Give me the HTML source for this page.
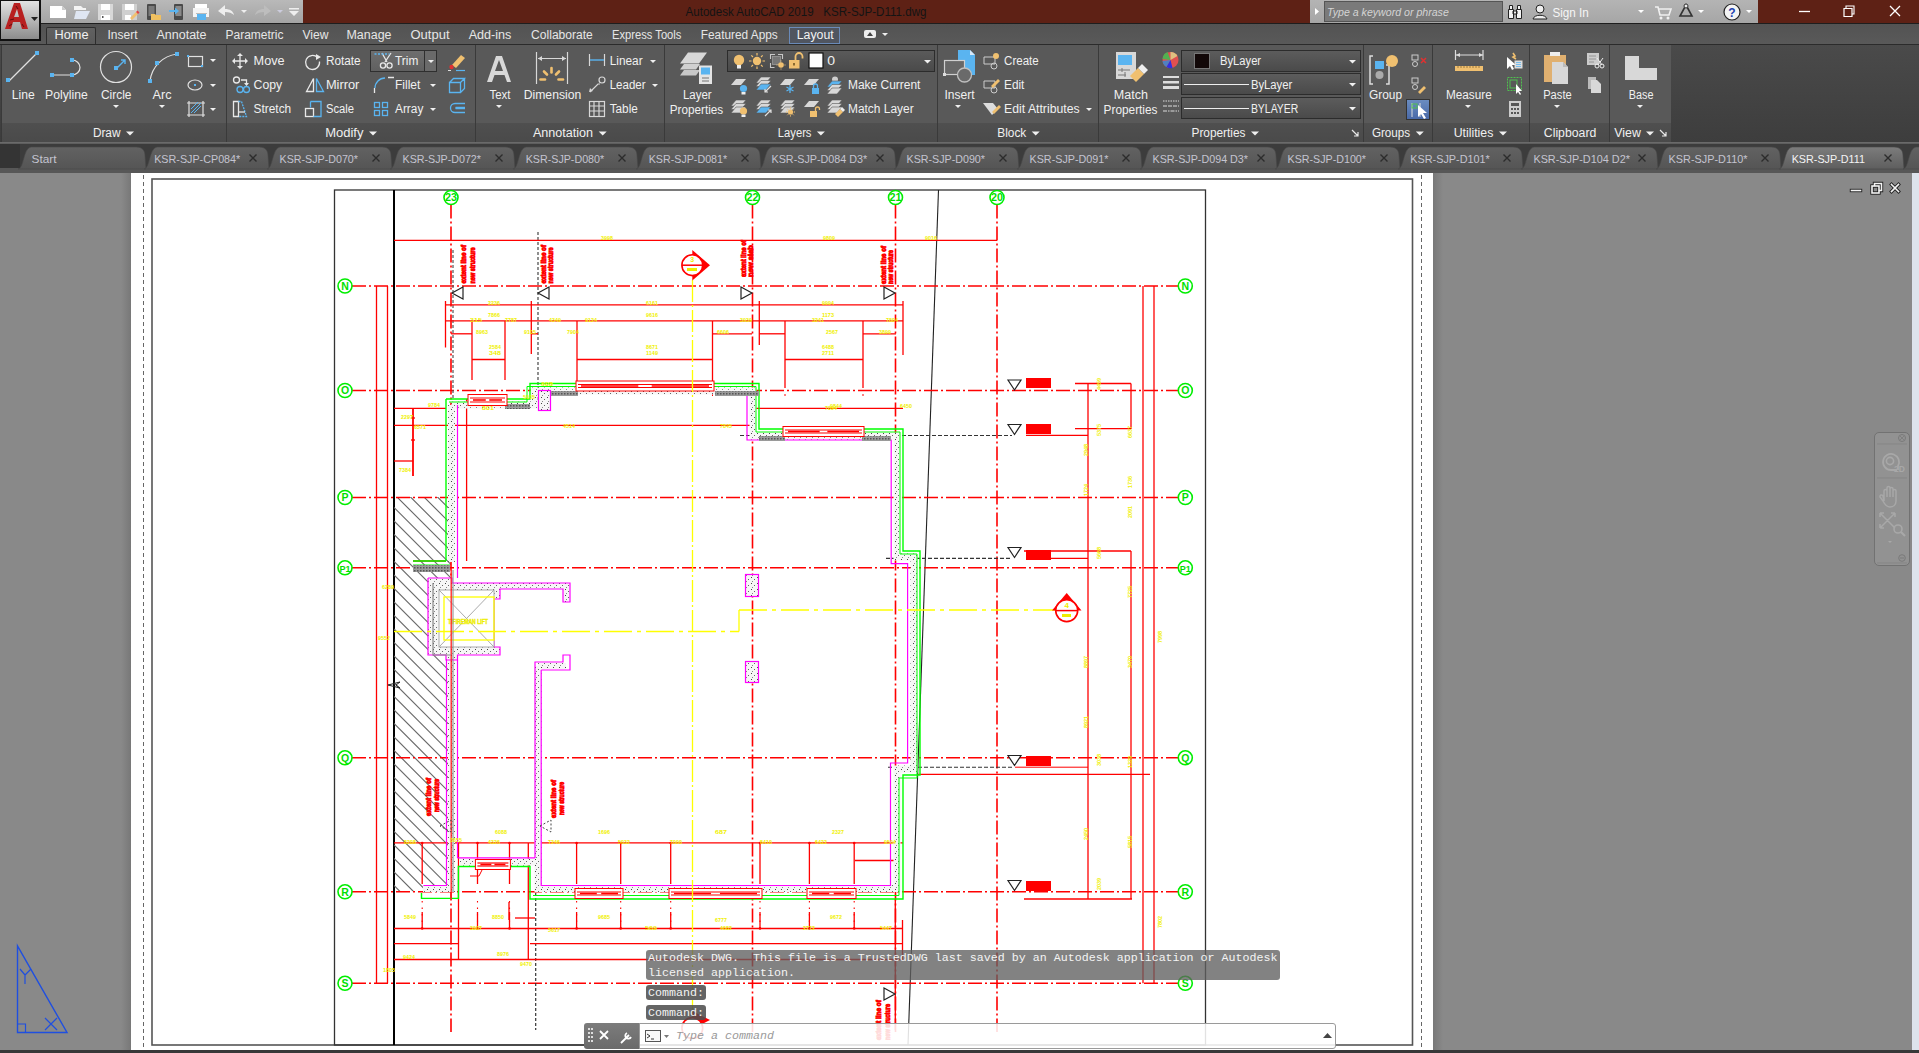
<!DOCTYPE html>
<html><head><meta charset="utf-8">
<style>
*{margin:0;padding:0;box-sizing:border-box}
html,body{width:1919px;height:1053px;overflow:hidden;background:#898989;font-family:"Liberation Sans",sans-serif;position:relative}
.a{position:absolute}
.t{position:absolute;white-space:nowrap;color:#ececec;font-size:12px;line-height:14px}
.rl{font-size:12.5px;color:#f0f0f0}
.panel{position:absolute;top:45px;height:97px;background:#595959;border-left:1px solid #3a3a3a}
.ptitle{position:absolute;left:0;bottom:0;width:100%;height:19px;background:linear-gradient(#4f4f4f,#4a4a4a);color:#eeeeee;font-size:12.5px;text-align:center;line-height:18px}
.arr{display:inline-block;width:0;height:0;border-left:4px solid transparent;border-right:4px solid transparent;border-top:5px solid #eee;margin-left:6px;vertical-align:2px}
.ftab{position:absolute;top:147px;height:23px;border-radius:10px 10px 2px 2px}
</style></head><body>
<div class="a" style="left:0;top:173px;width:1919px;height:880px;background:#898989"></div>
<svg class="a" style="left:0;top:0" width="1919" height="1053" viewBox="0 0 1919 1053"><defs><linearGradient id="shl" x1="1" y1="0" x2="0" y2="0"><stop offset="0" stop-color="#787878"/><stop offset="1" stop-color="#898989"/></linearGradient><linearGradient id="shr" x1="0" y1="0" x2="1" y2="0"><stop offset="0" stop-color="#787878"/><stop offset="1" stop-color="#898989"/></linearGradient></defs>
<rect x="121" y="173" width="10" height="877" fill="url(#shl)"/>
<rect x="1433" y="173" width="10" height="877" fill="url(#shr)"/>
<rect x="131" y="173" width="1302" height="877" fill="#ffffff" />
<line x1="143.5" y1="175" x2="143.5" y2="1048" stroke="#666" stroke-width="1" stroke-dasharray="4 3"/>
<line x1="1421.5" y1="175" x2="1421.5" y2="1048" stroke="#666" stroke-width="1" stroke-dasharray="4 3"/>
<rect x="152" y="179" width="1260.5" height="866" fill="none" stroke="#555" stroke-width="1.6"/>
<rect x="334.5" y="190" width="871" height="855" fill="none" stroke="#333" stroke-width="1.3"/>
<line x1="394" y1="190" x2="394" y2="1045" stroke="#000" stroke-width="2" />
<line x1="938.5" y1="190" x2="908" y2="1045" stroke="#222" stroke-width="1.1" />
<clipPath id="hc"><polygon points="394,497 451,497 451,891.5 394,891.5"/></clipPath>
<path clip-path="url(#hc)" d="M394 305.0 l70 70 M394 318.5 l70 70 M394 332.0 l70 70 M394 345.5 l70 70 M394 359.0 l70 70 M394 372.5 l70 70 M394 386.0 l70 70 M394 399.5 l70 70 M394 413.0 l70 70 M394 426.5 l70 70 M394 440.0 l70 70 M394 453.5 l70 70 M394 467.0 l70 70 M394 480.5 l70 70 M394 494.0 l70 70 M394 507.5 l70 70 M394 521.0 l70 70 M394 534.5 l70 70 M394 548.0 l70 70 M394 561.5 l70 70 M394 575.0 l70 70 M394 588.5 l70 70 M394 602.0 l70 70 M394 615.5 l70 70 M394 629.0 l70 70 M394 642.5 l70 70 M394 656.0 l70 70 M394 669.5 l70 70 M394 683.0 l70 70 M394 696.5 l70 70 M394 710.0 l70 70 M394 723.5 l70 70 M394 737.0 l70 70 M394 750.5 l70 70 M394 764.0 l70 70 M394 777.5 l70 70 M394 791.0 l70 70 M394 804.5 l70 70 M394 818.0 l70 70 M394 831.5 l70 70 M394 845.0 l70 70 M394 858.5 l70 70 M394 872.0 l70 70 M394 885.5 l70 70 M394 899.0 l70 70 M394 912.5 l70 70 M394 926.0 l70 70 M394 939.5 l70 70 M394 953.0 l70 70 M394 966.5 l70 70" stroke="#6a6a6a" stroke-width="1.15"/>
<line x1="352" y1="286" x2="1178" y2="286" stroke="#ff0000" stroke-width="1.6" stroke-dasharray="14 3 2 3"/>
<line x1="352" y1="390.5" x2="1178" y2="390.5" stroke="#ff0000" stroke-width="1.6" stroke-dasharray="14 3 2 3"/>
<line x1="352" y1="497.5" x2="1178" y2="497.5" stroke="#ff0000" stroke-width="1.6" stroke-dasharray="14 3 2 3"/>
<line x1="352" y1="567.8" x2="1178" y2="567.8" stroke="#ff0000" stroke-width="1.6" stroke-dasharray="14 3 2 3"/>
<line x1="352" y1="757.8" x2="1178" y2="757.8" stroke="#ff0000" stroke-width="1.6" stroke-dasharray="14 3 2 3"/>
<line x1="352" y1="891.8" x2="1178" y2="891.8" stroke="#ff0000" stroke-width="1.6" stroke-dasharray="14 3 2 3"/>
<line x1="352" y1="983.3" x2="1178" y2="983.3" stroke="#ff0000" stroke-width="1.6" stroke-dasharray="14 3 2 3"/>
<line x1="451" y1="204.5" x2="451" y2="1032" stroke="#ff0000" stroke-width="1.6" stroke-dasharray="14 3 2 3"/>
<line x1="752.5" y1="204.5" x2="752.5" y2="1032" stroke="#ff0000" stroke-width="1.6" stroke-dasharray="14 3 2 3"/>
<line x1="895.5" y1="204.5" x2="895.5" y2="1032" stroke="#ff0000" stroke-width="1.6" stroke-dasharray="14 3 2 3"/>
<line x1="997" y1="204.5" x2="997" y2="1032" stroke="#ff0000" stroke-width="1.6" stroke-dasharray="14 3 2 3"/>
<line x1="538" y1="232" x2="538" y2="400" stroke="#555" stroke-width="1.3" stroke-dasharray="3 2"/>
<line x1="535.7" y1="808" x2="535.7" y2="1030" stroke="#333" stroke-width="1.2" stroke-dasharray="3 2"/>
<line x1="453" y1="250" x2="453" y2="400" stroke="#555" stroke-width="1.2" stroke-dasharray="3 2"/>
<line x1="394" y1="240.4" x2="997" y2="240.4" stroke="#ff0000" stroke-width="1.3" />
<line x1="376.5" y1="286" x2="376.5" y2="983.3" stroke="#ff0000" stroke-width="1.3" />
<line x1="387.5" y1="286" x2="387.5" y2="983.3" stroke="#ff0000" stroke-width="1.3" />
<line x1="1143" y1="286" x2="1143" y2="983.3" stroke="#ff0000" stroke-width="1.3" />
<line x1="1154" y1="286" x2="1154" y2="983.3" stroke="#ff0000" stroke-width="1.3" />
<line x1="445" y1="304.8" x2="903" y2="304.8" stroke="#ff0000" stroke-width="1.3" />
<line x1="445" y1="320.9" x2="903" y2="320.9" stroke="#ff0000" stroke-width="1.3" />
<line x1="445.5" y1="301" x2="445.5" y2="347.5" stroke="#ff0000" stroke-width="1.3" />
<line x1="531.3" y1="301" x2="531.3" y2="354" stroke="#ff0000" stroke-width="1.3" />
<line x1="759.3" y1="301" x2="759.3" y2="345" stroke="#ff0000" stroke-width="1.3" />
<line x1="903" y1="301" x2="903" y2="355" stroke="#ff0000" stroke-width="1.3" />
<line x1="451" y1="333.8" x2="472" y2="333.8" stroke="#ff0000" stroke-width="1.3" />
<line x1="531" y1="333.8" x2="538" y2="333.8" stroke="#ff0000" stroke-width="1.3" />
<line x1="712.5" y1="333.8" x2="752" y2="333.8" stroke="#ff0000" stroke-width="1.3" />
<line x1="759" y1="333.8" x2="785" y2="333.8" stroke="#ff0000" stroke-width="1.3" />
<line x1="863" y1="333.8" x2="896" y2="333.8" stroke="#ff0000" stroke-width="1.3" />
<line x1="472" y1="321" x2="472" y2="380" stroke="#ff0000" stroke-width="1.3" />
<line x1="505" y1="321" x2="505" y2="380" stroke="#ff0000" stroke-width="1.3" />
<line x1="577" y1="321" x2="577" y2="388" stroke="#ff0000" stroke-width="1.3" />
<line x1="712.5" y1="321" x2="712.5" y2="388" stroke="#ff0000" stroke-width="1.3" />
<line x1="785" y1="321" x2="785" y2="388" stroke="#ff0000" stroke-width="1.3" />
<line x1="863" y1="321" x2="863" y2="388" stroke="#ff0000" stroke-width="1.3" />
<line x1="472" y1="359.5" x2="505" y2="359.5" stroke="#ff0000" stroke-width="1.3" />
<line x1="577" y1="359.5" x2="712.5" y2="359.5" stroke="#ff0000" stroke-width="1.3" />
<line x1="785" y1="359.5" x2="863" y2="359.5" stroke="#ff0000" stroke-width="1.3" />
<line x1="472" y1="394" x2="472" y2="396" stroke="#ff0000" stroke-width="1" />
<line x1="505" y1="394" x2="505" y2="396" stroke="#ff0000" stroke-width="1" />
<line x1="577" y1="394" x2="577" y2="396" stroke="#ff0000" stroke-width="1" />
<line x1="712.5" y1="394" x2="712.5" y2="396" stroke="#ff0000" stroke-width="1" />
<line x1="785" y1="394" x2="785" y2="396" stroke="#ff0000" stroke-width="1" />
<line x1="863" y1="394" x2="863" y2="396" stroke="#ff0000" stroke-width="1" />
<line x1="394" y1="408.3" x2="446" y2="408.3" stroke="#ff0000" stroke-width="1.3" />
<line x1="394" y1="425.4" x2="752" y2="425.4" stroke="#ff0000" stroke-width="1.3" />
<line x1="752" y1="408.3" x2="903" y2="408.3" stroke="#ff0000" stroke-width="1.3" />
<line x1="413" y1="408" x2="413" y2="476" stroke="#ff0000" stroke-width="1.8" />
<line x1="394" y1="461" x2="413" y2="461" stroke="#ff0000" stroke-width="1.3" />
<line x1="411" y1="418" x2="415" y2="418" stroke="#ff0000" stroke-width="1.3" />
<line x1="411" y1="440" x2="415" y2="440" stroke="#ff0000" stroke-width="1.3" />
<line x1="466.6" y1="399" x2="466.6" y2="561" stroke="#ff0000" stroke-width="1.3" />
<line x1="413" y1="561" x2="446" y2="561" stroke="#ff0000" stroke-width="1.3" />
<line x1="394" y1="842.8" x2="903" y2="842.8" stroke="#ff0000" stroke-width="1.3" />
<line x1="394" y1="928.5" x2="903" y2="928.5" stroke="#ff0000" stroke-width="1.3" />
<line x1="394" y1="943.7" x2="458.5" y2="943.7" stroke="#ff0000" stroke-width="1.3" />
<line x1="530" y1="943.7" x2="903" y2="943.7" stroke="#ff0000" stroke-width="1.3" />
<line x1="394" y1="959.5" x2="903" y2="959.5" stroke="#ff0000" stroke-width="1.3" />
<line x1="422.2" y1="843" x2="422.2" y2="884" stroke="#ff0000" stroke-width="1.3" />
<line x1="422.2" y1="901" x2="422.2" y2="928.5" stroke="#ff0000" stroke-width="1.1" stroke-dasharray="1.5 5"/>
<line x1="422.2" y1="912" x2="422.2" y2="928.5" stroke="#ff0000" stroke-width="1.3" />
<line x1="477.5" y1="843" x2="477.5" y2="884" stroke="#ff0000" stroke-width="1.3" />
<line x1="477.5" y1="901" x2="477.5" y2="928.5" stroke="#ff0000" stroke-width="1.1" stroke-dasharray="1.5 5"/>
<line x1="477.5" y1="912" x2="477.5" y2="928.5" stroke="#ff0000" stroke-width="1.3" />
<line x1="509.5" y1="843" x2="509.5" y2="884" stroke="#ff0000" stroke-width="1.3" />
<line x1="509.5" y1="901" x2="509.5" y2="928.5" stroke="#ff0000" stroke-width="1.1" stroke-dasharray="1.5 5"/>
<line x1="509.5" y1="912" x2="509.5" y2="928.5" stroke="#ff0000" stroke-width="1.3" />
<line x1="576.6" y1="843" x2="576.6" y2="884" stroke="#ff0000" stroke-width="1.3" />
<line x1="576.6" y1="901" x2="576.6" y2="928.5" stroke="#ff0000" stroke-width="1.1" stroke-dasharray="1.5 5"/>
<line x1="576.6" y1="912" x2="576.6" y2="928.5" stroke="#ff0000" stroke-width="1.3" />
<line x1="620.7" y1="843" x2="620.7" y2="884" stroke="#ff0000" stroke-width="1.3" />
<line x1="620.7" y1="901" x2="620.7" y2="928.5" stroke="#ff0000" stroke-width="1.1" stroke-dasharray="1.5 5"/>
<line x1="620.7" y1="912" x2="620.7" y2="928.5" stroke="#ff0000" stroke-width="1.3" />
<line x1="670.7" y1="843" x2="670.7" y2="884" stroke="#ff0000" stroke-width="1.3" />
<line x1="670.7" y1="901" x2="670.7" y2="928.5" stroke="#ff0000" stroke-width="1.1" stroke-dasharray="1.5 5"/>
<line x1="670.7" y1="912" x2="670.7" y2="928.5" stroke="#ff0000" stroke-width="1.3" />
<line x1="760" y1="843" x2="760" y2="884" stroke="#ff0000" stroke-width="1.3" />
<line x1="760" y1="901" x2="760" y2="928.5" stroke="#ff0000" stroke-width="1.1" stroke-dasharray="1.5 5"/>
<line x1="760" y1="912" x2="760" y2="928.5" stroke="#ff0000" stroke-width="1.3" />
<line x1="809.4" y1="843" x2="809.4" y2="884" stroke="#ff0000" stroke-width="1.3" />
<line x1="809.4" y1="901" x2="809.4" y2="928.5" stroke="#ff0000" stroke-width="1.1" stroke-dasharray="1.5 5"/>
<line x1="809.4" y1="912" x2="809.4" y2="928.5" stroke="#ff0000" stroke-width="1.3" />
<line x1="854.2" y1="843" x2="854.2" y2="884" stroke="#ff0000" stroke-width="1.3" />
<line x1="854.2" y1="901" x2="854.2" y2="928.5" stroke="#ff0000" stroke-width="1.1" stroke-dasharray="1.5 5"/>
<line x1="854.2" y1="912" x2="854.2" y2="928.5" stroke="#ff0000" stroke-width="1.3" />
<line x1="458.5" y1="843" x2="458.5" y2="960" stroke="#ff0000" stroke-width="1.3" />
<line x1="528.3" y1="843" x2="528.3" y2="960" stroke="#ff0000" stroke-width="1.3" />
<line x1="895.3" y1="899" x2="895.3" y2="1030" stroke="#ff0000" stroke-width="1.3" />
<line x1="902.5" y1="920" x2="902.5" y2="960" stroke="#ff0000" stroke-width="1.3" />
<line x1="855" y1="860.5" x2="896" y2="860.5" stroke="#ff0000" stroke-width="1.3" />
<circle cx="422.2" cy="928.5" r="1.3" fill="#ff0000"/><circle cx="422.2" cy="843" r="1.3" fill="#ff0000"/>
<circle cx="477.5" cy="928.5" r="1.3" fill="#ff0000"/><circle cx="477.5" cy="843" r="1.3" fill="#ff0000"/>
<circle cx="509.5" cy="928.5" r="1.3" fill="#ff0000"/><circle cx="509.5" cy="843" r="1.3" fill="#ff0000"/>
<circle cx="576.6" cy="928.5" r="1.3" fill="#ff0000"/><circle cx="576.6" cy="843" r="1.3" fill="#ff0000"/>
<circle cx="620.7" cy="928.5" r="1.3" fill="#ff0000"/><circle cx="620.7" cy="843" r="1.3" fill="#ff0000"/>
<circle cx="670.7" cy="928.5" r="1.3" fill="#ff0000"/><circle cx="670.7" cy="843" r="1.3" fill="#ff0000"/>
<circle cx="760" cy="928.5" r="1.3" fill="#ff0000"/><circle cx="760" cy="843" r="1.3" fill="#ff0000"/>
<circle cx="809.4" cy="928.5" r="1.3" fill="#ff0000"/><circle cx="809.4" cy="843" r="1.3" fill="#ff0000"/>
<circle cx="854.2" cy="928.5" r="1.3" fill="#ff0000"/><circle cx="854.2" cy="843" r="1.3" fill="#ff0000"/>
<line x1="1075" y1="383.5" x2="1131" y2="383.5" stroke="#ff0000" stroke-width="1.3" />
<line x1="1088" y1="383.5" x2="1088" y2="899" stroke="#ff0000" stroke-width="1.3" />
<line x1="1131" y1="383.5" x2="1131" y2="429" stroke="#ff0000" stroke-width="1.3" />
<line x1="1131" y1="551" x2="1131" y2="899" stroke="#ff0000" stroke-width="1.3" />
<line x1="1075" y1="428.6" x2="1131" y2="428.6" stroke="#ff0000" stroke-width="1.3" />
<line x1="1026" y1="435.3" x2="1088" y2="435.3" stroke="#ff0000" stroke-width="1.3" />
<line x1="1024" y1="551" x2="1131" y2="551" stroke="#ff0000" stroke-width="1.3" />
<line x1="1026" y1="558.4" x2="1088" y2="558.4" stroke="#ff0000" stroke-width="1.3" />
<line x1="918" y1="774.4" x2="1150" y2="774.4" stroke="#ff0000" stroke-width="1.3" />
<line x1="1015" y1="767.2" x2="1088" y2="767.2" stroke="#ff0000" stroke-width="1" />
<line x1="1024" y1="899" x2="1132" y2="899" stroke="#ff0000" stroke-width="1.3" />
<line x1="740" y1="435.5" x2="1012" y2="435.5" stroke="#333" stroke-width="1.1" stroke-dasharray="4 2"/>
<line x1="886" y1="558.4" x2="1012" y2="558.4" stroke="#333" stroke-width="1.1" stroke-dasharray="4 2"/>
<line x1="888" y1="767.2" x2="1012" y2="767.2" stroke="#333" stroke-width="1.1" stroke-dasharray="4 2"/>
<defs><pattern id="dots" width="6" height="6" patternUnits="userSpaceOnUse"><rect width="6" height="6" fill="#f6f6f6"/><rect x="1" y="1" width="1" height="1" fill="#444"/><rect x="4" y="3" width="1" height="1" fill="#666"/><rect x="2" y="5" width="1" height="1" fill="#888"/></pattern></defs>
<polyline points="451.5,405 534,405 534,391 753,391 753,436 897,436 897,557 914,557 914,769 897,769 897,888.5 538,888.5 538,666" fill="none" stroke="url(#dots)" stroke-width="7" />
<polyline points="451.5,405 451.5,562" fill="none" stroke="url(#dots)" stroke-width="7" />
<polyline points="451.5,650 451.5,888.5 423,888.5" fill="none" stroke="url(#dots)" stroke-width="7" />
<polyline points="459,862 541,862" fill="none" stroke="url(#dots)" stroke-width="7" />
<polyline points="446,399 530,399 530,383.5 759,383.5 759,429 903,429 903,551 920,551 920,775 903,775 903,899 530,899 530,866.5 458.4,866.5 458.4,898.4 421.5,898.4 421.5,893" fill="none" stroke="#00ff00" stroke-width="1.4" />
<polyline points="449,402 527,402 527,386.5 756,386.5 756,432 900,432 900,554 917,554 917,778 899,778 899,895.5 533,895.5" fill="none" stroke="#00ff00" stroke-width="1" />
<line x1="446" y1="399" x2="446" y2="561" stroke="#00ff00" stroke-width="1.4" />
<line x1="413" y1="561" x2="446" y2="561" stroke="#00ff00" stroke-width="1.4" />
<line x1="413" y1="565" x2="450" y2="565" stroke="#00ff00" stroke-width="1" />
<polyline points="747,395 747,440 891.2,440 891.2,563.6 907.6,563.6 907.6,763 890.5,763 890.5,885.5 541.2,885.5 541.2,670" fill="none" stroke="#ff00ff" stroke-width="1.2" />
<polyline points="446.5,660 446.5,885.5 423.4,885.5" fill="none" stroke="#ff00ff" stroke-width="1.2" />
<line x1="457.5" y1="405" x2="457.5" y2="578" stroke="#ff00ff" stroke-width="1.2" />
<line x1="457.5" y1="660" x2="457.5" y2="858" stroke="#ff00ff" stroke-width="1.2" />
<line x1="457.5" y1="857.8" x2="535" y2="857.8" stroke="#ff00ff" stroke-width="1.2" />
<polyline points="470,876 479,876 484,866" fill="none" stroke="#ff0000" stroke-width="1" />
<line x1="515" y1="918" x2="535" y2="918" stroke="#ff0000" stroke-width="1.3" />
<line x1="509" y1="902" x2="509" y2="920" stroke="#ff0000" stroke-width="1.3" />
<polyline points="428,578 452,578 452,583 570,583 570,602 563,602 563,589 500,589 500,599 494,599 494,647 500,647 500,655 494,655 457.5,655 457.5,660 446,660 446,655 428,655 428,578" fill="url(#dots)" stroke="#ff00ff" stroke-width="1.2" />
<rect x="439" y="590" width="55" height="57" fill="#fff" stroke="#aaa" stroke-width="1"/>
<line x1="439" y1="590" x2="494" y2="647" stroke="#aaa" stroke-width="1" />
<line x1="494" y1="590" x2="439" y2="647" stroke="#aaa" stroke-width="1" />
<rect x="444" y="597" width="50" height="43" fill="none" stroke="#ffff00" stroke-width="1.3"/>
<text x="448" y="623.5" font-size="6.5" font-weight="bold" fill="#eeee00" stroke="#eeee00" stroke-width="0.4" font-family="Liberation Sans" textLength="40" lengthAdjust="spacingAndGlyphs">T/FIREMAN LIFT</text>
<polyline points="566,666" fill="none" stroke="#ff00ff" stroke-width="1" />
<polyline points="538,666 566,666" fill="none" stroke="url(#dots)" stroke-width="6" />
<polyline points="535,858 535,662 563,662 563,655 570,655 570,670 541.2,670" fill="none" stroke="#ff00ff" stroke-width="1.2" />
<rect x="745.5" y="574.5" width="13" height="22" fill="url(#dots)" stroke="#ff00ff" stroke-width="1.2"/>
<rect x="745.5" y="661.5" width="13" height="21" fill="url(#dots)" stroke="#ff00ff" stroke-width="1.2"/>
<defs><pattern id="grav" width="3" height="3" patternUnits="userSpaceOnUse"><rect width="3" height="3" fill="#9a9a9a"/><rect x="0" y="0" width="1.5" height="1.5" fill="#555"/></pattern></defs>
<rect x="505" y="404" width="25" height="5" fill="url(#grav)" />
<rect x="540" y="391" width="38" height="5" fill="url(#grav)" />
<rect x="715" y="391" width="44" height="5" fill="url(#grav)" />
<rect x="759" y="436" width="26" height="5" fill="url(#grav)" />
<rect x="862" y="436" width="29" height="5" fill="url(#grav)" />
<rect x="413" y="565" width="37" height="7" fill="url(#grav)" />
<rect x="576" y="381.0" width="138" height="10" fill="#fff" stroke="#ff0000" stroke-width="1"/>
<line x1="578" y1="384.5" x2="712" y2="384.5" stroke="#ff0000" stroke-width="1.2" />
<line x1="578" y1="387.5" x2="712" y2="387.5" stroke="#ff0000" stroke-width="1.2" />
<line x1="581" y1="386.0" x2="638.3" y2="386.0" stroke="#ff0000" stroke-width="1.6" />
<line x1="651.7" y1="386.0" x2="709" y2="386.0" stroke="#ff0000" stroke-width="1.6" />
<rect x="783" y="426.5" width="81" height="10" fill="#fff" stroke="#ff0000" stroke-width="1"/>
<line x1="785" y1="430" x2="862" y2="430" stroke="#ff0000" stroke-width="1.2" />
<line x1="785" y1="433" x2="862" y2="433" stroke="#ff0000" stroke-width="1.2" />
<line x1="788" y1="431.5" x2="819.65" y2="431.5" stroke="#ff0000" stroke-width="1.6" />
<line x1="827.35" y1="431.5" x2="859" y2="431.5" stroke="#ff0000" stroke-width="1.6" />
<rect x="468" y="394.5" width="39" height="11" fill="#fff" stroke="#ff0000" stroke-width="1"/>
<line x1="470" y1="398" x2="505" y2="398" stroke="#ff0000" stroke-width="1.2" />
<line x1="470" y1="402" x2="505" y2="402" stroke="#ff0000" stroke-width="1.2" />
<line x1="473" y1="400.0" x2="485.75" y2="400.0" stroke="#ff0000" stroke-width="1.6" />
<line x1="489.25" y1="400.0" x2="502" y2="400.0" stroke="#ff0000" stroke-width="1.6" />
<rect x="575" y="888.5" width="48" height="10" fill="#fff" stroke="#ff0000" stroke-width="1"/>
<line x1="577" y1="892" x2="621" y2="892" stroke="#ff0000" stroke-width="1.2" />
<line x1="577" y1="895" x2="621" y2="895" stroke="#ff0000" stroke-width="1.2" />
<line x1="580" y1="893.5" x2="596.8" y2="893.5" stroke="#ff0000" stroke-width="1.6" />
<line x1="601.2" y1="893.5" x2="618" y2="893.5" stroke="#ff0000" stroke-width="1.6" />
<rect x="669" y="888.5" width="93" height="10" fill="#fff" stroke="#ff0000" stroke-width="1"/>
<line x1="671" y1="892" x2="760" y2="892" stroke="#ff0000" stroke-width="1.2" />
<line x1="671" y1="895" x2="760" y2="895" stroke="#ff0000" stroke-width="1.2" />
<line x1="674" y1="893.5" x2="711.05" y2="893.5" stroke="#ff0000" stroke-width="1.6" />
<line x1="719.95" y1="893.5" x2="757" y2="893.5" stroke="#ff0000" stroke-width="1.6" />
<rect x="807" y="888.5" width="49" height="10" fill="#fff" stroke="#ff0000" stroke-width="1"/>
<line x1="809" y1="892" x2="854" y2="892" stroke="#ff0000" stroke-width="1.2" />
<line x1="809" y1="895" x2="854" y2="895" stroke="#ff0000" stroke-width="1.2" />
<line x1="812" y1="893.5" x2="829.25" y2="893.5" stroke="#ff0000" stroke-width="1.6" />
<line x1="833.75" y1="893.5" x2="851" y2="893.5" stroke="#ff0000" stroke-width="1.6" />
<rect x="475.4" y="859.5" width="35" height="10" fill="#fff" stroke="#ff0000" stroke-width="1"/>
<line x1="477.4" y1="863" x2="508.4" y2="863" stroke="#ff0000" stroke-width="1.2" />
<line x1="477.4" y1="866" x2="508.4" y2="866" stroke="#ff0000" stroke-width="1.2" />
<line x1="480.4" y1="864.5" x2="491.34999999999997" y2="864.5" stroke="#ff0000" stroke-width="1.6" />
<line x1="494.45" y1="864.5" x2="505.4" y2="864.5" stroke="#ff0000" stroke-width="1.6" />
<rect x="538.5" y="390.5" width="12" height="20" fill="url(#dots)" stroke="#ff00ff" stroke-width="1.2"/>
<line x1="692.5" y1="280" x2="692.5" y2="1030" stroke="#ffff00" stroke-width="1.3" stroke-dasharray="22 3 2 3"/>
<line x1="394" y1="631.5" x2="739" y2="631.5" stroke="#ffff00" stroke-width="1.4" stroke-dasharray="28 5 4 5"/>
<line x1="739" y1="610" x2="739" y2="631.5" stroke="#ffff00" stroke-width="1.3" />
<line x1="739" y1="610" x2="1055" y2="610" stroke="#ffff00" stroke-width="1.4" stroke-dasharray="28 5 4 5"/>
<line x1="451.2" y1="570" x2="451.2" y2="900" stroke="#ff2020" stroke-width="1.3" />
<line x1="453" y1="570" x2="453" y2="892" stroke="#888" stroke-width="1" />
<polyline points="433,583 433,655 451,655" fill="none" stroke="#888" stroke-width="1.2" />
<path d="M388 685 l12 -3 l-4 3 l4 3 z" fill="none" stroke="#222" stroke-width="1"/>
<path d="M452 293 L463 287 L463 299 Z" fill="#fff" stroke="#222" stroke-width="1.2"/>
<path d="M538 293 L549 287 L549 299 Z" fill="#fff" stroke="#222" stroke-width="1.2"/>
<path d="M752 293 L741 287 L741 299 Z" fill="#fff" stroke="#222" stroke-width="1.2"/>
<path d="M895 293 L884 287 L884 299 Z" fill="#fff" stroke="#222" stroke-width="1.2"/>
<path d="M895 994 L884 988 L884 1000 Z" fill="#fff" stroke="#222" stroke-width="1.2"/>
<path d="M540 826 l11 -6 v12 z" fill="none" stroke="#444" stroke-width="1" stroke-dasharray="2 2"/>
<path d="M440 826 l11 -6 v12 z" fill="none" stroke="#444" stroke-width="1" stroke-dasharray="2 2"/>
<path d="M1008 380 h13 l-6.5 10 z" fill="#fff" stroke="#222" stroke-width="1.2"/>
<rect x="1026" y="378" width="25" height="10" fill="#ff0000" />
<path d="M1008 424.5 h13 l-6.5 10 z" fill="#fff" stroke="#222" stroke-width="1.2"/>
<rect x="1026" y="424" width="25" height="10" fill="#ff0000" />
<path d="M1008 547.5 h13 l-6.5 10 z" fill="#fff" stroke="#222" stroke-width="1.2"/>
<rect x="1026" y="550" width="25" height="10" fill="#ff0000" />
<path d="M1008 755.5 h13 l-6.5 10 z" fill="#fff" stroke="#222" stroke-width="1.2"/>
<rect x="1026" y="756" width="25" height="10" fill="#ff0000" />
<path d="M1008 880.5 h13 l-6.5 10 z" fill="#fff" stroke="#222" stroke-width="1.2"/>
<rect x="1026" y="881" width="25" height="10" fill="#ff0000" />
<text transform="translate(466,283.5) rotate(-90)" font-size="7.5" font-weight="bold" fill="#ff0000" stroke="#ff0000" stroke-width="0.9" font-family="Liberation Sans" textLength="38.5" lengthAdjust="spacingAndGlyphs">extent line of</text>
<text transform="translate(474.5,283.5) rotate(-90)" font-size="7.5" font-weight="bold" fill="#ff0000" stroke="#ff0000" stroke-width="0.9" font-family="Liberation Sans" textLength="36" lengthAdjust="spacingAndGlyphs">new structure</text>
<text transform="translate(545.5,283.5) rotate(-90)" font-size="7.5" font-weight="bold" fill="#ff0000" stroke="#ff0000" stroke-width="0.9" font-family="Liberation Sans" textLength="38.5" lengthAdjust="spacingAndGlyphs">extent line of</text>
<text transform="translate(553,283.5) rotate(-90)" font-size="7.5" font-weight="bold" fill="#ff0000" stroke="#ff0000" stroke-width="0.9" font-family="Liberation Sans" textLength="36" lengthAdjust="spacingAndGlyphs">new structure</text>
<text transform="translate(746,277) rotate(-90)" font-size="7.5" font-weight="bold" fill="#ff0000" stroke="#ff0000" stroke-width="0.9" font-family="Liberation Sans" textLength="37" lengthAdjust="spacingAndGlyphs">extent line of</text>
<text transform="translate(753,277) rotate(-90)" font-size="7.5" font-weight="bold" fill="#ff0000" stroke="#ff0000" stroke-width="0.9" font-family="Liberation Sans" textLength="32" lengthAdjust="spacingAndGlyphs">new slab</text>
<text transform="translate(886,284) rotate(-90)" font-size="7.5" font-weight="bold" fill="#ff0000" stroke="#ff0000" stroke-width="0.9" font-family="Liberation Sans" textLength="38" lengthAdjust="spacingAndGlyphs">extent line of</text>
<text transform="translate(893,284) rotate(-90)" font-size="7.5" font-weight="bold" fill="#ff0000" stroke="#ff0000" stroke-width="0.9" font-family="Liberation Sans" textLength="34" lengthAdjust="spacingAndGlyphs">new structure</text>
<text transform="translate(431,816) rotate(-90)" font-size="7.5" font-weight="bold" fill="#ff0000" stroke="#ff0000" stroke-width="0.9" font-family="Liberation Sans" textLength="38" lengthAdjust="spacingAndGlyphs">extent line of</text>
<text transform="translate(439,812) rotate(-90)" font-size="7.5" font-weight="bold" fill="#ff0000" stroke="#ff0000" stroke-width="0.9" font-family="Liberation Sans" textLength="33" lengthAdjust="spacingAndGlyphs">new structure</text>
<text transform="translate(556,818) rotate(-90)" font-size="7.5" font-weight="bold" fill="#ff0000" stroke="#ff0000" stroke-width="0.9" font-family="Liberation Sans" textLength="38" lengthAdjust="spacingAndGlyphs">extent line of</text>
<text transform="translate(564,815) rotate(-90)" font-size="7.5" font-weight="bold" fill="#ff0000" stroke="#ff0000" stroke-width="0.9" font-family="Liberation Sans" textLength="33" lengthAdjust="spacingAndGlyphs">new structure</text>
<text transform="translate(881,1040) rotate(-90)" font-size="7.5" font-weight="bold" fill="#ff0000" stroke="#ff0000" stroke-width="0.9" font-family="Liberation Sans" textLength="40" lengthAdjust="spacingAndGlyphs">extent line of</text>
<text transform="translate(890,1040) rotate(-90)" font-size="7.5" font-weight="bold" fill="#ff0000" stroke="#ff0000" stroke-width="0.9" font-family="Liberation Sans" textLength="36" lengthAdjust="spacingAndGlyphs">new structure</text>
<path d="M692.3 250 L710 265.2 L692.3 280.5 Z" fill="#ff0000"/><circle cx="692.3" cy="265.2" r="10.4" fill="#fff" stroke="#ff0000" stroke-width="1.6"/><line x1="682" y1="265.2" x2="702.6" y2="265.2" stroke="#ff0000" stroke-width="1.5"/>
<text x="692.3" y="262" font-size="7" font-weight="bold" text-anchor="middle" fill="#eeee00" font-family="Liberation Sans">3</text><rect x="687" y="268" width="10" height="3" fill="#eeee00"/>
<path d="M1066.7 593 L1081.5 610.6 L1052 610.6 Z" fill="#ff0000"/><circle cx="1066.7" cy="610.6" r="11" fill="#fff" stroke="#ff0000" stroke-width="1.6"/><line x1="1056" y1="610.6" x2="1077.5" y2="610.6" stroke="#ff0000" stroke-width="1.5"/>
<text x="1066.7" y="608" font-size="8" font-weight="bold" text-anchor="middle" fill="#eeee00" font-family="Liberation Sans">4</text><rect x="1062" y="614" width="9" height="3" fill="#eeee00"/>
<path d="M692.3 1011 L710 1020 L692.3 1029 Z" fill="#ff0000"/><circle cx="692.3" cy="1028" r="10.4" fill="#fff" stroke="#ff0000" stroke-width="1.6"/>
<circle cx="345" cy="286" r="7" fill="#fff" stroke="#00ee00" stroke-width="1.6"/>
<text x="345" y="289.8" font-size="10.5" font-weight="bold" text-anchor="middle" fill="#00e000" font-family="Liberation Sans">N</text>
<circle cx="1185.3" cy="286" r="7" fill="#fff" stroke="#00ee00" stroke-width="1.6"/>
<text x="1185.3" y="289.8" font-size="10.5" font-weight="bold" text-anchor="middle" fill="#00e000" font-family="Liberation Sans">N</text>
<circle cx="345" cy="390.5" r="7" fill="#fff" stroke="#00ee00" stroke-width="1.6"/>
<text x="345" y="394.3" font-size="10.5" font-weight="bold" text-anchor="middle" fill="#00e000" font-family="Liberation Sans">O</text>
<circle cx="1185.3" cy="390.5" r="7" fill="#fff" stroke="#00ee00" stroke-width="1.6"/>
<text x="1185.3" y="394.3" font-size="10.5" font-weight="bold" text-anchor="middle" fill="#00e000" font-family="Liberation Sans">O</text>
<circle cx="345" cy="497.5" r="7" fill="#fff" stroke="#00ee00" stroke-width="1.6"/>
<text x="345" y="501.3" font-size="10.5" font-weight="bold" text-anchor="middle" fill="#00e000" font-family="Liberation Sans">P</text>
<circle cx="1185.3" cy="497.5" r="7" fill="#fff" stroke="#00ee00" stroke-width="1.6"/>
<text x="1185.3" y="501.3" font-size="10.5" font-weight="bold" text-anchor="middle" fill="#00e000" font-family="Liberation Sans">P</text>
<circle cx="345" cy="567.8" r="7" fill="#fff" stroke="#00ee00" stroke-width="1.6"/>
<text x="345" y="571.5999999999999" font-size="9" font-weight="bold" text-anchor="middle" fill="#00e000" font-family="Liberation Sans">P1</text>
<circle cx="1185.3" cy="567.8" r="7" fill="#fff" stroke="#00ee00" stroke-width="1.6"/>
<text x="1185.3" y="571.5999999999999" font-size="9" font-weight="bold" text-anchor="middle" fill="#00e000" font-family="Liberation Sans">P1</text>
<circle cx="345" cy="757.8" r="7" fill="#fff" stroke="#00ee00" stroke-width="1.6"/>
<text x="345" y="761.5999999999999" font-size="10.5" font-weight="bold" text-anchor="middle" fill="#00e000" font-family="Liberation Sans">Q</text>
<circle cx="1185.3" cy="757.8" r="7" fill="#fff" stroke="#00ee00" stroke-width="1.6"/>
<text x="1185.3" y="761.5999999999999" font-size="10.5" font-weight="bold" text-anchor="middle" fill="#00e000" font-family="Liberation Sans">Q</text>
<circle cx="345" cy="891.8" r="7" fill="#fff" stroke="#00ee00" stroke-width="1.6"/>
<text x="345" y="895.5999999999999" font-size="10.5" font-weight="bold" text-anchor="middle" fill="#00e000" font-family="Liberation Sans">R</text>
<circle cx="1185.3" cy="891.8" r="7" fill="#fff" stroke="#00ee00" stroke-width="1.6"/>
<text x="1185.3" y="895.5999999999999" font-size="10.5" font-weight="bold" text-anchor="middle" fill="#00e000" font-family="Liberation Sans">R</text>
<circle cx="345" cy="983.3" r="7" fill="#fff" stroke="#00ee00" stroke-width="1.6"/>
<text x="345" y="987.0999999999999" font-size="10.5" font-weight="bold" text-anchor="middle" fill="#00e000" font-family="Liberation Sans">S</text>
<circle cx="1185.3" cy="983.3" r="7" fill="#fff" stroke="#00ee00" stroke-width="1.6"/>
<text x="1185.3" y="987.0999999999999" font-size="10.5" font-weight="bold" text-anchor="middle" fill="#00e000" font-family="Liberation Sans">S</text>
<circle cx="451" cy="197.5" r="7" fill="#fff" stroke="#00ee00" stroke-width="1.6"/>
<text x="445" y="201.3" font-size="10.5" font-weight="bold" fill="#00e000" font-family="Liberation Sans" textLength="12" lengthAdjust="spacingAndGlyphs">23</text>
<circle cx="752.5" cy="197.5" r="7" fill="#fff" stroke="#00ee00" stroke-width="1.6"/>
<text x="746.5" y="201.3" font-size="10.5" font-weight="bold" fill="#00e000" font-family="Liberation Sans" textLength="12" lengthAdjust="spacingAndGlyphs">22</text>
<circle cx="895.5" cy="197.5" r="7" fill="#fff" stroke="#00ee00" stroke-width="1.6"/>
<text x="889.5" y="201.3" font-size="10.5" font-weight="bold" fill="#00e000" font-family="Liberation Sans" textLength="12" lengthAdjust="spacingAndGlyphs">21</text>
<circle cx="997" cy="197.5" r="7" fill="#fff" stroke="#00ee00" stroke-width="1.6"/>
<text x="991" y="201.3" font-size="10.5" font-weight="bold" fill="#00e000" font-family="Liberation Sans" textLength="12" lengthAdjust="spacingAndGlyphs">20</text>
<text x="601" y="240" font-size="6" font-weight="bold" fill="#f0f000" font-family="Liberation Sans" textLength="12" lengthAdjust="spacingAndGlyphs">3998</text>
<text x="823" y="240" font-size="6" font-weight="bold" fill="#f0f000" font-family="Liberation Sans" textLength="12" lengthAdjust="spacingAndGlyphs">9809</text>
<text x="925" y="240" font-size="6" font-weight="bold" fill="#f0f000" font-family="Liberation Sans" textLength="12" lengthAdjust="spacingAndGlyphs">9016</text>
<text x="488" y="305" font-size="6" font-weight="bold" fill="#f0f000" font-family="Liberation Sans" textLength="12" lengthAdjust="spacingAndGlyphs">2236</text>
<text x="646" y="305" font-size="6" font-weight="bold" fill="#f0f000" font-family="Liberation Sans" textLength="12" lengthAdjust="spacingAndGlyphs">6161</text>
<text x="822" y="305" font-size="6" font-weight="bold" fill="#f0f000" font-family="Liberation Sans" textLength="12" lengthAdjust="spacingAndGlyphs">9994</text>
<text x="488" y="317" font-size="6" font-weight="bold" fill="#f0f000" font-family="Liberation Sans" textLength="12" lengthAdjust="spacingAndGlyphs">7866</text>
<text x="646" y="317" font-size="6" font-weight="bold" fill="#f0f000" font-family="Liberation Sans" textLength="12" lengthAdjust="spacingAndGlyphs">9616</text>
<text x="822" y="317" font-size="6" font-weight="bold" fill="#f0f000" font-family="Liberation Sans" textLength="12" lengthAdjust="spacingAndGlyphs">1173</text>
<text x="470" y="322" font-size="6" font-weight="bold" fill="#f0f000" font-family="Liberation Sans" textLength="12" lengthAdjust="spacingAndGlyphs">315</text>
<text x="505" y="322" font-size="6" font-weight="bold" fill="#f0f000" font-family="Liberation Sans" textLength="12" lengthAdjust="spacingAndGlyphs">7787</text>
<text x="549" y="322" font-size="6" font-weight="bold" fill="#f0f000" font-family="Liberation Sans" textLength="12" lengthAdjust="spacingAndGlyphs">4349</text>
<text x="585" y="322" font-size="6" font-weight="bold" fill="#f0f000" font-family="Liberation Sans" textLength="12" lengthAdjust="spacingAndGlyphs">9124</text>
<text x="740" y="322" font-size="6" font-weight="bold" fill="#f0f000" font-family="Liberation Sans" textLength="12" lengthAdjust="spacingAndGlyphs">3939</text>
<text x="812" y="322" font-size="6" font-weight="bold" fill="#f0f000" font-family="Liberation Sans" textLength="12" lengthAdjust="spacingAndGlyphs">3241</text>
<text x="886" y="322" font-size="6" font-weight="bold" fill="#f0f000" font-family="Liberation Sans" textLength="12" lengthAdjust="spacingAndGlyphs">7804</text>
<text x="476" y="334" font-size="6" font-weight="bold" fill="#f0f000" font-family="Liberation Sans" textLength="12" lengthAdjust="spacingAndGlyphs">8963</text>
<text x="524" y="334" font-size="6" font-weight="bold" fill="#f0f000" font-family="Liberation Sans" textLength="12" lengthAdjust="spacingAndGlyphs">9105</text>
<text x="567" y="334" font-size="6" font-weight="bold" fill="#f0f000" font-family="Liberation Sans" textLength="12" lengthAdjust="spacingAndGlyphs">7904</text>
<text x="717" y="334" font-size="6" font-weight="bold" fill="#f0f000" font-family="Liberation Sans" textLength="12" lengthAdjust="spacingAndGlyphs">6606</text>
<text x="826" y="334" font-size="6" font-weight="bold" fill="#f0f000" font-family="Liberation Sans" textLength="12" lengthAdjust="spacingAndGlyphs">2567</text>
<text x="879" y="334" font-size="6" font-weight="bold" fill="#f0f000" font-family="Liberation Sans" textLength="12" lengthAdjust="spacingAndGlyphs">3899</text>
<text x="489" y="349" font-size="6" font-weight="bold" fill="#f0f000" font-family="Liberation Sans" textLength="12" lengthAdjust="spacingAndGlyphs">2584</text>
<text x="646" y="349" font-size="6" font-weight="bold" fill="#f0f000" font-family="Liberation Sans" textLength="12" lengthAdjust="spacingAndGlyphs">8671</text>
<text x="822" y="349" font-size="6" font-weight="bold" fill="#f0f000" font-family="Liberation Sans" textLength="12" lengthAdjust="spacingAndGlyphs">6488</text>
<text x="489" y="355" font-size="6" font-weight="bold" fill="#f0f000" font-family="Liberation Sans" textLength="12" lengthAdjust="spacingAndGlyphs">348</text>
<text x="646" y="355" font-size="6" font-weight="bold" fill="#f0f000" font-family="Liberation Sans" textLength="12" lengthAdjust="spacingAndGlyphs">1149</text>
<text x="822" y="355" font-size="6" font-weight="bold" fill="#f0f000" font-family="Liberation Sans" textLength="12" lengthAdjust="spacingAndGlyphs">2711</text>
<text x="428" y="407" font-size="6" font-weight="bold" fill="#f0f000" font-family="Liberation Sans" textLength="12" lengthAdjust="spacingAndGlyphs">9784</text>
<text x="482" y="410" font-size="6" font-weight="bold" fill="#f0f000" font-family="Liberation Sans" textLength="12" lengthAdjust="spacingAndGlyphs">801</text>
<text x="523" y="399" font-size="6" font-weight="bold" fill="#f0f000" font-family="Liberation Sans" textLength="12" lengthAdjust="spacingAndGlyphs">5035</text>
<text x="541" y="386" font-size="6" font-weight="bold" fill="#f0f000" font-family="Liberation Sans" textLength="12" lengthAdjust="spacingAndGlyphs">608</text>
<text x="563" y="428" font-size="6" font-weight="bold" fill="#f0f000" font-family="Liberation Sans" textLength="12" lengthAdjust="spacingAndGlyphs">4514</text>
<text x="720" y="428" font-size="6" font-weight="bold" fill="#f0f000" font-family="Liberation Sans" textLength="12" lengthAdjust="spacingAndGlyphs">7845</text>
<text x="830" y="408" font-size="6" font-weight="bold" fill="#f0f000" font-family="Liberation Sans" textLength="12" lengthAdjust="spacingAndGlyphs">9844</text>
<text x="900" y="408" font-size="6" font-weight="bold" fill="#f0f000" font-family="Liberation Sans" textLength="12" lengthAdjust="spacingAndGlyphs">6450</text>
<text x="825" y="410" font-size="6" font-weight="bold" fill="#f0f000" font-family="Liberation Sans" textLength="12" lengthAdjust="spacingAndGlyphs">7094</text>
<text x="414" y="429" font-size="6" font-weight="bold" fill="#f0f000" font-family="Liberation Sans" textLength="12" lengthAdjust="spacingAndGlyphs">6571</text>
<text x="378" y="640" font-size="6" font-weight="bold" fill="#f0f000" font-family="Liberation Sans" textLength="12" lengthAdjust="spacingAndGlyphs">9552</text>
<text x="399" y="472" font-size="6" font-weight="bold" fill="#f0f000" font-family="Liberation Sans" textLength="12" lengthAdjust="spacingAndGlyphs">7384</text>
<text x="401" y="419" font-size="6" font-weight="bold" fill="#f0f000" font-family="Liberation Sans" textLength="12" lengthAdjust="spacingAndGlyphs">2297</text>
<text x="495" y="834" font-size="6" font-weight="bold" fill="#f0f000" font-family="Liberation Sans" textLength="12" lengthAdjust="spacingAndGlyphs">6088</text>
<text x="598" y="834" font-size="6" font-weight="bold" fill="#f0f000" font-family="Liberation Sans" textLength="12" lengthAdjust="spacingAndGlyphs">1696</text>
<text x="715" y="834" font-size="6" font-weight="bold" fill="#f0f000" font-family="Liberation Sans" textLength="12" lengthAdjust="spacingAndGlyphs">687</text>
<text x="832" y="834" font-size="6" font-weight="bold" fill="#f0f000" font-family="Liberation Sans" textLength="12" lengthAdjust="spacingAndGlyphs">2327</text>
<text x="404" y="844" font-size="6" font-weight="bold" fill="#f0f000" font-family="Liberation Sans" textLength="12" lengthAdjust="spacingAndGlyphs">8208</text>
<text x="450" y="842" font-size="6" font-weight="bold" fill="#f0f000" font-family="Liberation Sans" textLength="12" lengthAdjust="spacingAndGlyphs">3655</text>
<text x="488" y="844" font-size="6" font-weight="bold" fill="#f0f000" font-family="Liberation Sans" textLength="12" lengthAdjust="spacingAndGlyphs">4326</text>
<text x="548" y="844" font-size="6" font-weight="bold" fill="#f0f000" font-family="Liberation Sans" textLength="12" lengthAdjust="spacingAndGlyphs">7246</text>
<text x="618" y="844" font-size="6" font-weight="bold" fill="#f0f000" font-family="Liberation Sans" textLength="12" lengthAdjust="spacingAndGlyphs">5032</text>
<text x="670" y="844" font-size="6" font-weight="bold" fill="#f0f000" font-family="Liberation Sans" textLength="12" lengthAdjust="spacingAndGlyphs">7000</text>
<text x="760" y="844" font-size="6" font-weight="bold" fill="#f0f000" font-family="Liberation Sans" textLength="12" lengthAdjust="spacingAndGlyphs">8410</text>
<text x="815" y="844" font-size="6" font-weight="bold" fill="#f0f000" font-family="Liberation Sans" textLength="12" lengthAdjust="spacingAndGlyphs">6422</text>
<text x="884" y="844" font-size="6" font-weight="bold" fill="#f0f000" font-family="Liberation Sans" textLength="12" lengthAdjust="spacingAndGlyphs">9504</text>
<text x="404" y="919" font-size="6" font-weight="bold" fill="#f0f000" font-family="Liberation Sans" textLength="12" lengthAdjust="spacingAndGlyphs">5849</text>
<text x="492" y="919" font-size="6" font-weight="bold" fill="#f0f000" font-family="Liberation Sans" textLength="12" lengthAdjust="spacingAndGlyphs">8850</text>
<text x="598" y="919" font-size="6" font-weight="bold" fill="#f0f000" font-family="Liberation Sans" textLength="12" lengthAdjust="spacingAndGlyphs">9685</text>
<text x="715" y="922" font-size="6" font-weight="bold" fill="#f0f000" font-family="Liberation Sans" textLength="12" lengthAdjust="spacingAndGlyphs">6777</text>
<text x="830" y="919" font-size="6" font-weight="bold" fill="#f0f000" font-family="Liberation Sans" textLength="12" lengthAdjust="spacingAndGlyphs">9672</text>
<text x="470" y="930" font-size="6" font-weight="bold" fill="#f0f000" font-family="Liberation Sans" textLength="12" lengthAdjust="spacingAndGlyphs">3907</text>
<text x="548" y="932" font-size="6" font-weight="bold" fill="#f0f000" font-family="Liberation Sans" textLength="12" lengthAdjust="spacingAndGlyphs">5617</text>
<text x="645" y="930" font-size="6" font-weight="bold" fill="#f0f000" font-family="Liberation Sans" textLength="12" lengthAdjust="spacingAndGlyphs">569</text>
<text x="720" y="930" font-size="6" font-weight="bold" fill="#f0f000" font-family="Liberation Sans" textLength="12" lengthAdjust="spacingAndGlyphs">4682</text>
<text x="803" y="930" font-size="6" font-weight="bold" fill="#f0f000" font-family="Liberation Sans" textLength="12" lengthAdjust="spacingAndGlyphs">2772</text>
<text x="880" y="930" font-size="6" font-weight="bold" fill="#f0f000" font-family="Liberation Sans" textLength="12" lengthAdjust="spacingAndGlyphs">5447</text>
<text x="497" y="956" font-size="6" font-weight="bold" fill="#f0f000" font-family="Liberation Sans" textLength="12" lengthAdjust="spacingAndGlyphs">8976</text>
<text x="520" y="966" font-size="6" font-weight="bold" fill="#f0f000" font-family="Liberation Sans" textLength="12" lengthAdjust="spacingAndGlyphs">9470</text>
<text x="403" y="959" font-size="6" font-weight="bold" fill="#f0f000" font-family="Liberation Sans" textLength="12" lengthAdjust="spacingAndGlyphs">9424</text>
<text x="383" y="972" font-size="6" font-weight="bold" fill="#f0f000" font-family="Liberation Sans" textLength="12" lengthAdjust="spacingAndGlyphs">1805</text>
<text transform="translate(1101,390) rotate(-90)" font-size="6" font-weight="bold" fill="#f0f000" font-family="Liberation Sans" textLength="12" lengthAdjust="spacingAndGlyphs">4459</text>
<text transform="translate(1101,436) rotate(-90)" font-size="6" font-weight="bold" fill="#f0f000" font-family="Liberation Sans" textLength="12" lengthAdjust="spacingAndGlyphs">5375</text>
<text transform="translate(1101,559) rotate(-90)" font-size="6" font-weight="bold" fill="#f0f000" font-family="Liberation Sans" textLength="12" lengthAdjust="spacingAndGlyphs">5668</text>
<text transform="translate(1101,766) rotate(-90)" font-size="6" font-weight="bold" fill="#f0f000" font-family="Liberation Sans" textLength="12" lengthAdjust="spacingAndGlyphs">3038</text>
<text transform="translate(1101,890) rotate(-90)" font-size="6" font-weight="bold" fill="#f0f000" font-family="Liberation Sans" textLength="12" lengthAdjust="spacingAndGlyphs">2039</text>
<text transform="translate(1088,668) rotate(-90)" font-size="6" font-weight="bold" fill="#f0f000" font-family="Liberation Sans" textLength="12" lengthAdjust="spacingAndGlyphs">8897</text>
<text transform="translate(1088,728) rotate(-90)" font-size="6" font-weight="bold" fill="#f0f000" font-family="Liberation Sans" textLength="12" lengthAdjust="spacingAndGlyphs">8921</text>
<text transform="translate(1088,840) rotate(-90)" font-size="6" font-weight="bold" fill="#f0f000" font-family="Liberation Sans" textLength="12" lengthAdjust="spacingAndGlyphs">2450</text>
<text transform="translate(1132,438) rotate(-90)" font-size="6" font-weight="bold" fill="#f0f000" font-family="Liberation Sans" textLength="12" lengthAdjust="spacingAndGlyphs">6637</text>
<text transform="translate(1132,518) rotate(-90)" font-size="6" font-weight="bold" fill="#f0f000" font-family="Liberation Sans" textLength="12" lengthAdjust="spacingAndGlyphs">2091</text>
<text transform="translate(1132,598) rotate(-90)" font-size="6" font-weight="bold" fill="#f0f000" font-family="Liberation Sans" textLength="12" lengthAdjust="spacingAndGlyphs">7725</text>
<text transform="translate(1132,668) rotate(-90)" font-size="6" font-weight="bold" fill="#f0f000" font-family="Liberation Sans" textLength="12" lengthAdjust="spacingAndGlyphs">3470</text>
<text transform="translate(1132,768) rotate(-90)" font-size="6" font-weight="bold" fill="#f0f000" font-family="Liberation Sans" textLength="12" lengthAdjust="spacingAndGlyphs">1329</text>
<text transform="translate(1132,848) rotate(-90)" font-size="6" font-weight="bold" fill="#f0f000" font-family="Liberation Sans" textLength="12" lengthAdjust="spacingAndGlyphs">5815</text>
<text transform="translate(1162,643) rotate(-90)" font-size="6" font-weight="bold" fill="#f0f000" font-family="Liberation Sans" textLength="12" lengthAdjust="spacingAndGlyphs">7998</text>
<text transform="translate(1162,928) rotate(-90)" font-size="6" font-weight="bold" fill="#f0f000" font-family="Liberation Sans" textLength="12" lengthAdjust="spacingAndGlyphs">7802</text>
<text transform="translate(1088,456) rotate(-90)" font-size="6" font-weight="bold" fill="#f0f000" font-family="Liberation Sans" textLength="12" lengthAdjust="spacingAndGlyphs">2948</text>
<text transform="translate(1088,496) rotate(-90)" font-size="6" font-weight="bold" fill="#f0f000" font-family="Liberation Sans" textLength="12" lengthAdjust="spacingAndGlyphs">1724</text>
<text transform="translate(1132,488) rotate(-90)" font-size="6" font-weight="bold" fill="#f0f000" font-family="Liberation Sans" textLength="12" lengthAdjust="spacingAndGlyphs">1736</text>
<text x="382" y="589" font-size="6" font-weight="bold" fill="#f0f000" font-family="Liberation Sans" textLength="12" lengthAdjust="spacingAndGlyphs">6289</text></svg>
<!-- right strip -->
<div class="a" style="left:1912px;top:173px;width:7px;height:877px;background:#dde3ec"></div>
<div class="a" style="left:0;top:1050px;width:1919px;height:3px;background:#383838"></div>
<!-- viewport controls -->
<svg class="a" style="left:1845px;top:180px" width="60" height="16" viewBox="1845 180 60 16">
 <g stroke="#222" stroke-width="3.4" fill="none" stroke-linecap="square"><path d="M1851.5 190.5 h9"/><rect x="1872" y="186" width="7" height="7"/><path d="M1874.5 185.5 v-2 h7 v7 h-2"/><path d="M1891.5 184.5 l7 7 M1898.5 184.5 l-7 7"/></g>
 <g stroke="#f4f4f4" stroke-width="1.6" fill="none" stroke-linecap="square"><path d="M1851.5 190.5 h9"/><rect x="1872" y="186" width="7" height="7"/><path d="M1874.5 185.5 v-2 h7 v7 h-2"/><path d="M1891.5 184.5 l7 7 M1898.5 184.5 l-7 7"/></g>
</svg>
<!-- nav bar -->
<div class="a" style="left:1874px;top:432px;width:36px;height:134px;border:1.5px solid #727272;border-radius:5px;background:#929292"></div>
<svg class="a" style="left:1873px;top:431px" width="37" height="135" viewBox="1873 431 37 135">
 <circle cx="1902" cy="438" r="3.5" fill="none" stroke="#7a7a7a"/><path d="M1900 436 l4 4 M1904 436 l-4 4" stroke="#7a7a7a" stroke-width=".8"/>
 <path d="M1877 444 h30 M1877 478 h30 M1877 563 h30" stroke="#858585"/>
 <g stroke="#a8a8a8" fill="none"><path d="M1897 470 h-6 a8 8 0 1 1 7 -4 v4" stroke-width="1.8"/><circle cx="1890" cy="461" r="3.6" stroke-width="1.6"/></g>
 <text x="1894" y="472" font-size="8.5" font-weight="bold" fill="#a8a8a8" font-family="Liberation Sans">2D</text>
 <path d="M1884 501 v-10 a1.5 1.5 0 0 1 3 0 v6 v-9 a1.5 1.5 0 0 1 3 0 v9 v-8 a1.5 1.5 0 0 1 3 0 v8 v-6 a1.5 1.5 0 0 1 3 0 v10 c0 4 -3 6 -6 6 c-3 0 -5 -2 -7 -6 l-3 -4 a1.5 1.5 0 0 1 3 -1z" fill="none" stroke="#a8a8a8" stroke-width="1.5"/>
 <path d="M1880 513 l15 15 M1880 528 l15 -15 M1880 513 h4 M1880 513 v4 M1880 528 h4 M1880 528 v-4 M1895 513 h-4 M1895 513 v4" stroke="#a8a8a8" stroke-width="1.5" fill="none"/>
 <circle cx="1898" cy="529" r="4" fill="none" stroke="#a8a8a8" stroke-width="1.6"/><path d="M1901 532 l4 4" stroke="#a8a8a8" stroke-width="2.2"/>
 <path d="M1888 541 h4 l-2 2z" fill="#a8a8a8"/>
 <circle cx="1902" cy="558" r="3.3" fill="none" stroke="#7a7a7a"/><path d="M1900 558 h4" stroke="#7a7a7a"/>
</svg>
<!-- UCS icon -->
<svg class="a" style="left:10px;top:935px" width="70" height="105" viewBox="10 935 70 105">
 <path d="M17.5 946 L17.5 1032.5 L67 1032.5 Z" fill="none" stroke="#1f4fe0" stroke-width="1.4"/>
 <path d="M17.5 1024 h8 v8.5" fill="none" stroke="#1f4fe0" stroke-width="1.2"/>
 <path d="M20 969 l5 6 l6-6 M25 975 v9" fill="none" stroke="#1f4fe0" stroke-width="1.2"/>
 <path d="M45 1018 l12 12 M57 1018 l-12 12" stroke="#1f4fe0" stroke-width="1.2"/>
</svg>
<!-- command history -->
<div class="a" style="left:646px;top:950px;width:634px;height:30px;background:rgba(95,95,95,0.78);border-radius:3px"></div>
<div class="a" style="left:646px;top:985px;width:60px;height:15px;background:rgba(80,80,80,0.88);border-radius:3px"></div>
<div class="a" style="left:646px;top:1005px;width:60px;height:15px;background:rgba(80,80,80,0.88);border-radius:3px"></div>
<div class="t" style="left:648px;top:951px;font-family:'Liberation Mono',monospace;font-size:11.67px;line-height:15px;color:#f4f4f4">Autodesk DWG.&nbsp; This file is a TrustedDWG last saved by an Autodesk application or Autodesk<br>licensed application.</div>
<div class="t" style="left:648px;top:986px;font-family:'Liberation Mono',monospace;font-size:11.67px;line-height:15px;color:#f4f4f4">Command:</div>
<div class="t" style="left:648px;top:1006px;font-family:'Liberation Mono',monospace;font-size:11.67px;line-height:15px;color:#f4f4f4">Command:</div>
<!-- command line -->
<div class="a" style="left:584px;top:1023px;width:56px;height:26px;background:linear-gradient(#7c7c7c,#6a6a6a);border-radius:3px 0 0 3px"></div>
<div class="a" style="left:639px;top:1023px;width:697px;height:26px;background:rgba(255,255,255,0.86);border:1px solid #9a9a9a;border-radius:0 3px 3px 0"></div>
<svg class="a" style="left:584px;top:1023px" width="752" height="26" viewBox="584 1023 752 26">
 <g fill="#ddd"><rect x="588" y="1028" width="2" height="2"/><rect x="591" y="1028" width="2" height="2"/><rect x="588" y="1032" width="2" height="2"/><rect x="591" y="1032" width="2" height="2"/><rect x="588" y="1036" width="2" height="2"/><rect x="591" y="1036" width="2" height="2"/><rect x="588" y="1040" width="2" height="2"/><rect x="591" y="1040" width="2" height="2"/></g>
 <path d="M600 1031 l8 8 M608 1031 l-8 8" stroke="#fff" stroke-width="1.8"/>
 <path d="M621 1043 l8-8 M627 1033 a3 3 0 1 0 4 4" stroke="#fff" stroke-width="1.8" fill="none"/>
 <rect x="645.5" y="1030.5" width="15" height="11" fill="#f8f8f8" stroke="#555"/><path d="M647 1034 l3 2 -3 2 M651 1039 h3" stroke="#333" fill="none"/>
 <path d="M664 1035 h5 l-2.5 3z" fill="#777"/>
 <path d="M1323 1038 h9 l-4.5 -5z" fill="#444"/>
</svg>
<div class="t" style="left:676px;top:1029px;font-family:'Liberation Mono',monospace;font-style:italic;font-size:11.67px;color:#9a9a9a">Type a command</div>

<!-- TITLE BAR -->
<div class="a" style="left:0;top:0;width:1919px;height:24px;background:#5e2115"></div>
<div class="a" style="left:41px;top:0;width:262px;height:23px;background:linear-gradient(#b9b9b9,#a4a4a4)"></div>
<div class="a" style="left:1310px;top:0;width:448px;height:23px;background:linear-gradient(#b4b4b4,#a6a6a6)"></div>
<div class="a" style="left:0;top:23px;width:1919px;height:1px;background:#1e1e1e"></div>
<div class="a" style="left:0;top:0;width:41px;height:41px;background:linear-gradient(#e2e2e2,#8c8c8c);border:1px solid #111;border-width:1px 2px 2px 1px"></div>
<svg class="a" style="left:0;top:0" width="41" height="41" viewBox="0 0 41 41">
 <path d="M5 29 L14 3 L20 3 L28 29 L22 29 L20 22 L13 22 L11 29 Z M14 17 L19 17 L17 9 Z" fill="#b82020"/>
 <path d="M9 26 l3-2 M16 6 l2 3 M22 24 l2 3 M10 20 l4 -1" stroke="#601010" stroke-width="1"/>
 <path d="M31 17 L38 17 L34.5 21 Z" fill="#222"/>
</svg>
<svg class="a" style="left:41px;top:0" width="262" height="23" viewBox="41 0 262 23">
 <path d="M50 6 h12 l4 4 v8 h-16 z" fill="#fff"/><path d="M62 6 v4 h4z" fill="#ccc"/>
 <path d="M74 6 h7 l2 2 h3 v2 h-12 z" fill="#f4f4f4"/><path d="M76 11 h14 l-4 8 h-12z" fill="#dfe6f2"/>
 <path d="M98 4 h15 v16 h-15z" fill="#d8d8d8"/><path d="M101 4 h9 v6 h-9z M101 15 h9 v5 h-9z" fill="#fff"/><rect x="102" y="16" width="1.5" height="2" fill="#555"/>
 <path d="M122 4 h15 v16 h-15z" fill="#d0d0d0"/><path d="M125 4 h9 v6 h-9z M125 15 h6 v5 h-6z" fill="#fff"/><path d="M130 18 l6-6 2 2 -6 6z" fill="#f0c070"/><path d="M136 12 l1.5-1.5 2 2 -1.5 1.5z" fill="#e04040"/>
 <rect x="147" y="4" width="9" height="16" rx="1" fill="#4a4a4a"/><rect x="148.5" y="6" width="6" height="10" fill="#7a7a7a"/><path d="M151 14 h4 l1 1 h5 v5 h-10z" fill="#f0c060"/>
 <rect x="174" y="4" width="9" height="16" rx="1" fill="#4a4a4a"/><rect x="175.5" y="6" width="6" height="10" fill="#8a8a8a"/><path d="M169 10 h6 v-2.5 l4 3.5 -4 3.5 v-2.5 h-6z" fill="#5ab4f0"/>
 <path d="M195 4 h12 v4 h-12z" fill="#fff"/><path d="M193 8 h16 v9 h-16z" fill="#f4f4f4"/><path d="M197 14 h9 v6 h-9z" fill="#5ab4f0"/><path d="M196 13 h11 v1 h-11z" fill="#bbb"/>
 <path d="M218 11 l7-6 v4 c5 0 8 2 9 6 c-2-2-5-3-9-3 v4z" fill="#eee"/>
 <path d="M241 10 h6 l-3 3z" fill="#eee"/>
 <path d="M256 11 l7-6 v4 c5 0 8 2 9 6 c-2-2-5-3-9-3 v4z" fill="#bdbdbd" transform="translate(527 0) scale(-1 1)"/>
 <path d="M277 10 h6 l-3 3z" fill="#ccd"/>
 <path d="M289 8 h10 v1.5 h-10z M289 11 h10 l-5 5z" fill="#eee"/>
</svg>
<svg class="a" style="left:1310px;top:0" width="448" height="23" viewBox="1310 0 448 23">
 <path d="M1315 8 l4 3.5 -4 3.5z" fill="#fff"/>
 <rect x="1324.5" y="1.5" width="178" height="20" fill="#7a7a7a" stroke="#555"/>
 <path d="M1508.5 9.5 h5 v9 h-5z M1516.5 9.5 h5 v9 h-5z M1509.5 5.5 h3 v4 h-3z M1517.5 5.5 h3 v4 h-3z M1513 11 h4 v3 h-4z" fill="#f4f4f4" stroke="#222" stroke-width="1"/>
 <circle cx="1540" cy="9" r="4" fill="#eee" stroke="#222"/><path d="M1533 19 c1-5 13-5 14 0z" fill="#eee" stroke="#222"/>
 <path d="M1638 10 h6 l-3 3z" fill="#fff"/>
 <path d="M1655 7 h3 l2 8 h9 l2-6 h-12" fill="none" stroke="#f0f0f0" stroke-width="1.6"/><circle cx="1661" cy="18" r="1.5" fill="#f0f0f0"/><circle cx="1668" cy="18" r="1.5" fill="#f0f0f0"/>
 <path d="M1686 5 l6 11 h-12z" fill="none" stroke="#333" stroke-width="1.6"/><circle cx="1686" cy="6" r="2" fill="#eee" stroke="#333"/>
 <path d="M1698 10 h6 l-3 3z" fill="#fff"/>
 <circle cx="1732" cy="12" r="8" fill="#f4f4f4" stroke="#222" stroke-width="1.2"/><text x="1732" y="16.5" font-size="12" font-weight="bold" text-anchor="middle" fill="#2040b0" font-family="Liberation Sans">?</text>
 <path d="M1746 10 h6 l-3 3z" fill="#fff"/>
</svg>
<svg class="a" style="left:1760px;top:0" width="159" height="24" viewBox="1760 0 159 24">
 <path d="M1799 11.5 h11" stroke="#fff" stroke-width="1.3"/>
 <path d="M1844 8.5 h8 v8 h-8z" fill="none" stroke="#fff" stroke-width="1.2"/><path d="M1846 8 v-2 h8 v8 h-2" fill="none" stroke="#fff" stroke-width="1.1"/>
 <path d="M1890 6 l10 10 M1900 6 l-10 10" stroke="#fff" stroke-width="1.3"/>
</svg>

<!-- TAB ROW -->
<div class="a" style="left:41px;top:24px;width:1878px;height:20px;background:linear-gradient(#535353,#595959)"></div>
<div class="a" style="left:0;top:41px;width:41px;height:3px;background:#585858"></div>
<div class="a" style="left:46px;top:27px;width:50px;height:18px;background:linear-gradient(#616161,#595959);border:1px solid #2d2d2d;border-bottom:none;border-radius:2px 2px 0 0"></div>
<div class="a" style="left:789px;top:27px;width:51px;height:17px;background:#505560;border:1px solid #6a8ab8"></div>
<svg class="a" style="left:860px;top:28px" width="30" height="14"><rect x="4" y="2" width="12" height="8" rx="2" fill="#eee"/><path d="M7 8 l3-4 3 4z" fill="#444"/><path d="M22 5 h6 l-3 3z" fill="#eee"/></svg>
<!-- RIBBON BG -->
<div class="a" style="left:0;top:44px;width:1919px;height:99px;background:linear-gradient(#4a4a4a,#3d3d3d);border-top:1px solid #2b2b2b"></div>
<div class="a" style="left:0;top:142px;width:1919px;height:1px;background:#6a6a6a"></div>
<!-- PANELS -->
<div class="panel" style="left:1px;width:225px"><div class="ptitle"></div></div>
<div class="panel" style="left:226px;width:249px"><div class="ptitle"></div></div>
<div class="panel" style="left:475px;width:189px"><div class="ptitle"></div></div>
<div class="panel" style="left:664px;width:273px"><div class="ptitle"></div></div>
<div class="panel" style="left:937px;width:161px"><div class="ptitle"></div></div>
<div class="panel" style="left:1098px;width:265px"><div class="ptitle"></div></div>
<div class="panel" style="left:1363px;width:69px"><div class="ptitle"></div></div>
<div class="panel" style="left:1432px;width:97px"><div class="ptitle"></div></div>
<div class="panel" style="left:1529px;width:80px"><div class="ptitle"></div></div>
<div class="panel" style="left:1609px;width:62px"><div class="ptitle"></div></div>
<svg class="a" style="left:0;top:0" width="1919" height="143"><path d="M126 131.5 h8 l-4 4z M369 131.5 h8 l-4 4z M598.7 131.5 h8 l-4 4z M816.9 131.5 h8 l-4 4z M1031.7 131.5 h8 l-4 4z M1251 131.5 h8 l-4 4z M1415.8 131.5 h8 l-4 4z M1499 131.5 h8 l-4 4z M1646 131.5 h8 l-4 4z" fill="#f0f0f0"/><path d="M1352 130 l6 6 M1358 132 v4 h-4 M1660 130 l6 6 M1666 132 v4 h-4" stroke="#e8e8e8" stroke-width="1.2" fill="none"/></svg>

<!-- DRAW PANEL -->
<div class="a" style="left:370px;top:50px;width:55px;height:22px;background:linear-gradient(#6e6e6e,#606060);border:1px solid #2f2f2f"></div>
<div class="a" style="left:425px;top:50px;width:12px;height:22px;background:#6a6a6a;border:1px solid #2f2f2f;border-left:none"></div>
<div class="a" style="left:727px;top:50px;width:208px;height:22px;background:linear-gradient(#5a5a5a,#4a4a4a);border:1px solid #2c2c2c"></div>
<div class="a" style="left:1181px;top:50px;width:180px;height:22px;background:linear-gradient(#5c5c5c,#4a4a4a);border:1px solid #2c2c2c"></div>
<div class="a" style="left:1181px;top:73px;width:180px;height:22px;background:linear-gradient(#5c5c5c,#4a4a4a);border:1px solid #2c2c2c"></div>
<div class="a" style="left:1181px;top:97px;width:180px;height:22px;background:linear-gradient(#5c5c5c,#4a4a4a);border:1px solid #2c2c2c"></div>
<div class="a" style="left:1194px;top:53px;width:16px;height:16px;background:#120808;border:1px solid #777"></div>
<div class="a" style="left:1184px;top:84px;width:65px;height:1px;background:#eee"></div>
<div class="a" style="left:1184px;top:108px;width:65px;height:1px;background:#eee"></div>
<div class="a" style="left:1406px;top:99px;width:24px;height:21px;background:linear-gradient(#6a8cc0,#4a6aa8);border:1px solid #333"></div>

<svg class="a" style="left:0;top:0" width="1919" height="143" viewBox="0 0 1919 143">
<g fill="none" stroke="#e0e0e0" stroke-width="1.2">
 <!-- Line -->
 <path d="M9 81 L37 53"/>
 <!-- Polyline -->
 <path d="M52 75 h20 M72 60 a8 7.5 0 0 1 0 15"/>
 <!-- Circle -->
 <circle cx="116" cy="67" r="15.5"/>
 <!-- Arc -->
 <path d="M150 81 C152 66 163 56 177 54"/>
 <!-- rect/ellipse/hatch -->
 <rect x="188.5" y="56.5" width="14" height="10"/>
 <ellipse cx="195" cy="85" rx="7" ry="5"/>
 <path d="M186 56+0"/>
 <path d="M187 103 h18 M187 115 h18 M189 101 v16 M203 101 v16"/>
</g>
<g fill="#5ab4f0">
 <rect x="6" y="78" width="4" height="4"/><rect x="35" y="51" width="4" height="4"/>
 <rect x="50" y="73" width="4" height="4"/><rect x="70" y="73" width="4" height="4"/><rect x="70" y="58" width="4" height="4"/>
 <rect x="114" y="66" width="4" height="4"/>
 <rect x="148" y="79" width="4" height="4"/><rect x="155" y="61" width="4" height="4"/><rect x="175" y="52" width="4" height="4"/>
 <rect x="187" y="55" width="2" height="2"/><rect x="201" y="65" width="2" height="2"/>
 <rect x="194" y="84" width="2" height="2"/>
</g>
<path d="M117 68 l8-8 M121 60 h4 v4" stroke="#5ab4f0" stroke-width="1.4" fill="none"/>
<path d="M191 113 l10-10 M191 109 l7-7 M194 113 l7-7" stroke="#5ab4f0" stroke-width="1"/>
<g fill="#f0f0f0"><path d="M113 105 h6 l-3 3z"/><path d="M159 105 h6 l-3 3z"/><path d="M210 59 h6 l-3 3z"/><path d="M210 84 h6 l-3 3z"/><path d="M210 108 h6 l-3 3z"/></g>
<!-- MODIFY icons -->
<g fill="none" stroke="#e8e8e8" stroke-width="1.3">
 <path d="M240 54 v14 M233 61 h14"/>
 <path d="M317.5 57.5 a7 7 0 1 0 2 4"/>
 <circle cx="236.5" cy="80" r="3"/>
 <path d="M241 80 h5.5 v5"/>
 <path d="M313.5 78.5 v13 h-7z"/>
 <path d="M233.5 101.5 h5 v15 h-5z"/>
 <rect x="305.5" y="108.5" width="8" height="8"/>
 <path d="M382 53 l5 9 M391 53 l-6 9"/><circle cx="383" cy="65.5" r="2.6"/><circle cx="389.5" cy="65.5" r="2.6"/>
 <path d="M374.5 93 v-5 M388 77.5 h6"/>
</g>
<g fill="none" stroke="#5ab4f0" stroke-width="1.3">
 <circle cx="240" cy="89.5" r="3"/><circle cx="246.5" cy="89.5" r="3"/>
 <path d="M316.5 78.5 v13 h7z"/>
 <path d="M238.5 101.5 h3 l5 15 h-8" stroke-dasharray="2 1"/><path d="M239 112 h6" stroke="#e8e8e8"/>
 <path d="M310.5 101.5 h10.5 v15 h-7.5 M310.5 101.5 v6"/>
 <path d="M374.5 54 h15" stroke-dasharray="2 1.5"/>
 <path d="M375 88 a10 10 0 0 1 10 -10"/>
 <rect x="374.5" y="102.5" width="5" height="5"/><rect x="382.5" y="102.5" width="5" height="5"/><rect x="374.5" y="110.5" width="5" height="5"/><rect x="382.5" y="110.5" width="5" height="5"/>
 <path d="M449.5 82.5 h11 v10 h-11z M449.5 82.5 l4 -4 h11 l-4 4 M464.5 78.5 v10 l-4 4"/>
 <path d="M465 103.5 h-10 a4.5 4.5 0 0 0 0 9 h10 M465 107.5 h-9 a1 1 0 0 0 0 1 h9"/>
</g>
<path d="M240 53 l-3 3 h6z M240 69 l-3-3 h6z M232 61 l3-3 v6z M248 61 l-3-3 v6z M316 54 l5 3 -5 3z M246.5 86 l-2.5 -3 h5z" fill="#e8e8e8"/>
<path d="M452 65 l9 -10 4 3 -9 10z" fill="#f0c070"/><circle cx="451.5" cy="67" r="2.2" fill="#e03030"/><path d="M456 70.5 h9" stroke="#5ab4f0" stroke-width="1.2"/><path d="M448 70.5 h3" stroke="#ddd" stroke-width="1"/>
<g fill="#f0f0f0"><path d="M428 60 h6 l-3 3z"/><path d="M430 84 h6 l-3 3z"/><path d="M430 108 h6 l-3 3z"/></g>
<!-- ANNOTATION -->
<path d="M487 82 l9-26 h6 l9 26 h-4 l-2.5-7 h-10 l-2.5 7z M495 71 h8 l-4-11z" fill="#d8d8d8"/>
<g fill="none" stroke="#d8d8d8" stroke-width="1.2"><path d="M536.5 52 v32 M567.5 52 v32 M538 58.5 h28"/><path d="M589.5 54 v12 M604.5 54 v12"/><rect x="589.5" y="101.5" width="15" height="15"/><path d="M589 106 h15 M589 111 h15 M594 101 v15 M599 101 v15"/><path d="M590 92 l8-8 h2"/><circle cx="602" cy="80" r="3"/></g>
<path d="M538 58.5 l4-2.5 v5z M566 58.5 l-4-2.5 v5z M589 92 l1-4 3 3z" fill="#d8d8d8"/>
<path d="M590 60 h14" stroke="#5ab4f0" stroke-width="1.4"/>
<g stroke="#f0c070" stroke-width="2.6" stroke-linecap="round"><path d="M551.5 68 v4.5"/><path d="M544 71.5 l3 3"/><path d="M559 71.5 l-3 3"/><path d="M540.5 79.5 h4.5"/><path d="M558.5 79.5 h4.5"/></g>
<g fill="#f0f0f0"><path d="M496 105 h6 l-3 3z"/><path d="M650 60 h6 l-3 3z"/><path d="M652 84 h6 l-3 3z"/></g>
<!-- LAYERS -->
<path d="M680 63.5 l8-11 h19 l-8 11z" fill="#d8d8d8"/><path d="M680 69.5 l4-5.5 h16 l-4 5.5z" fill="#d0d0d0"/><path d="M680 75.5 l4-5.5 h16 l-4 5.5z" fill="#c8c8c8"/>
<rect x="699" y="65.5" width="13" height="18.5" fill="#e4e4e4"/><rect x="701" y="67.5" width="9" height="7" fill="#5ab4f0"/><path d="M702 78 h7 M702 81 h7" stroke="#666" stroke-width="0.9"/>
<circle cx="739" cy="60" r="5.2" fill="#f0c070"/><rect x="737" y="65" width="4" height="3.5" fill="#eee"/>
<circle cx="757" cy="61" r="4.2" fill="#f0c070"/><path d="M757 53 v2.5 M757 66.5 v2.5 M749 61 h2.5 M762.5 61 h2.5 M751.3 55.3 l1.7 1.7 M762.7 55.3 l-1.7 1.7 M751.3 66.7 l1.7 -1.7 M762.7 66.7 l-1.7 -1.7" stroke="#f0c070" stroke-width="1.2"/>
<path d="M770.5 59 v-4.5 h4.5 M778 54.5 h4.5 v4.5 M770.5 63 v4.5 h4" stroke="#c8c8c8" stroke-width="1.1" fill="none"/><rect x="772.5" y="56.5" width="8" height="8" fill="#777" stroke="#999" stroke-width="0.8"/><circle cx="781" cy="65" r="2.8" fill="#f0c070"/><path d="M781 60.5 v1 M781 68.5 v1 M776.5 65 h1 M784.5 65 h1" stroke="#f0c070"/>
<rect x="789" y="60" width="10.5" height="8.5" fill="#f0c070"/><path d="M795.5 60 v-3.5 a3.5 3.5 0 0 1 7 0 v2" fill="none" stroke="#f0c070" stroke-width="1.8"/><rect x="793" y="63" width="2" height="2.5" fill="#8a6a30"/>
<rect x="809" y="53" width="14" height="15" fill="#fff" stroke="#111" stroke-width="1.2"/>
<path d="M731 85 l5 -6 h10 l-5 6z" fill="#d8d8d8"/>
<circle cx="743.5" cy="88.5" r="3.6" fill="#5ab4f0"/><rect x="741.5" y="92" width="4" height="2.5" fill="#eee"/>
<path d="M756 83.0 l5 -6 h10 l-5 6z" fill="#d8d8d8" stroke="#585858" stroke-width="0.6"/><path d="M756 86.5 l5 -6 h10 l-5 6z" fill="#d8d8d8" stroke="#585858" stroke-width="0.6"/><path d="M756 90.0 l5 -6 h10 l-5 6z" fill="#5ab4f0" stroke="#585858" stroke-width="0.6"/>
<path d="M771 86 l-6 6 M765 89 v3 h3" stroke="#e0e0e0" stroke-width="1.2" fill="none"/>
<path d="M780 85 l5 -6 h10 l-5 6z" fill="#d8d8d8"/>
<path d="M790 85 v8 M786.5 87 l7 4 M786.5 91 l7 -4" stroke="#5ab4f0" stroke-width="1.3"/>
<path d="M804 85 l5 -6 h10 l-5 6z" fill="#d8d8d8"/>
<rect x="812" y="88" width="7" height="6" fill="#5ab4f0"/><path d="M813.5 88 v-2 a2 2 0 0 1 4 0 v2" stroke="#5ab4f0" stroke-width="1.3" fill="none"/>
<circle cx="835" cy="79.5" r="3" fill="#cfcfcf"/>
<path d="M827 87.0 l5 -6 h10 l-5 6z" fill="#5ab4f0" stroke="#585858" stroke-width="0.6"/><path d="M827 90.5 l5 -6 h10 l-5 6z" fill="#d8d8d8" stroke="#585858" stroke-width="0.6"/><path d="M827 94.0 l5 -6 h10 l-5 6z" fill="#d8d8d8" stroke="#585858" stroke-width="0.6"/>
<path d="M731 106.0 l5 -6 h10 l-5 6z" fill="#d8d8d8" stroke="#585858" stroke-width="0.6"/><path d="M731 109.5 l5 -6 h10 l-5 6z" fill="#d8d8d8" stroke="#585858" stroke-width="0.6"/><path d="M731 113.0 l5 -6 h10 l-5 6z" fill="#d8d8d8" stroke="#585858" stroke-width="0.6"/>
<circle cx="743.5" cy="111" r="3.6" fill="#f0c070"/><rect x="741.5" y="114.5" width="4" height="2.5" fill="#eee"/>
<path d="M756 106.0 l5 -6 h10 l-5 6z" fill="#d8d8d8" stroke="#585858" stroke-width="0.6"/><path d="M756 109.5 l5 -6 h10 l-5 6z" fill="#d8d8d8" stroke="#585858" stroke-width="0.6"/><path d="M756 113.0 l5 -6 h10 l-5 6z" fill="#5ab4f0" stroke="#585858" stroke-width="0.6"/>
<path d="M765 116 l6 -6 M768 110 h3 v3" stroke="#e0e0e0" stroke-width="1.2" fill="none"/>
<path d="M780 106.0 l5 -6 h10 l-5 6z" fill="#d8d8d8" stroke="#585858" stroke-width="0.6"/><path d="M780 109.5 l5 -6 h10 l-5 6z" fill="#d8d8d8" stroke="#585858" stroke-width="0.6"/><path d="M780 113.0 l5 -6 h10 l-5 6z" fill="#d8d8d8" stroke="#585858" stroke-width="0.6"/>
<circle cx="790.5" cy="112" r="2.6" fill="#f0c070"/><path d="M790.5 107.5 v1.2 M790.5 115.3 v1.2 M786 112 h1.2 M793.8 112 h1.2 M787.3 108.8 l.9 .9 M793.7 108.8 l-.9 .9 M787.3 115.2 l.9 -.9 M793.7 115.2 l-.9 -.9" stroke="#f0c070" stroke-width="1"/>
<path d="M804 107 l5 -6 h10 l-5 6z" fill="#d8d8d8"/>
<rect x="810" y="111" width="7" height="6" fill="#f0c070"/><path d="M815.5 111 v-2 a2 2 0 0 1 4 0 v1" stroke="#f0c070" stroke-width="1.3" fill="none"/>
<path d="M827 106.0 l5 -6 h10 l-5 6z" fill="#d8d8d8" stroke="#585858" stroke-width="0.6"/><path d="M827 109.5 l5 -6 h10 l-5 6z" fill="#d8d8d8" stroke="#585858" stroke-width="0.6"/><path d="M827 113.0 l5 -6 h10 l-5 6z" fill="#d8d8d8" stroke="#585858" stroke-width="0.6"/>
<path d="M835 114 l5 -5 3 3 -5 5z" fill="#f0c070"/><path d="M840 109 l2 -2 3 3 -2 2z" fill="#eee"/>
<g fill="#f0f0f0"><path d="M924 60 h7 l-3.5 3.5z"/></g>
<!-- BLOCK -->
<path d="M958 50 h12 l5 5 v20 h-17z" fill="#5ab4f0"/><path d="M970 50 v5 h5z" fill="#d8e8f8"/><rect x="944.5" y="60.5" width="20" height="14" fill="#686868" stroke="#d0d0d0" stroke-width="1.2"/><circle cx="964.5" cy="75" r="7" fill="#6a6a6a" stroke="#c0c0c0" stroke-width="1.3"/><rect x="943" y="73" width="3" height="3" fill="#ddd"/>
<g fill="none" stroke="#ccc" stroke-width="1"><path d="M984 57 h11 v7 h-11z M984 81 h11 v7 h-11z"/><circle cx="994" cy="66" r="3"/><circle cx="994" cy="90" r="3"/></g>
<circle cx="996" cy="56" r="3" fill="#f0c070"/><path d="M991 86 l7-7 2 2 -7 7z" fill="#f0c070"/>
<path d="M983 103 h10 l5 6 -6 6z" fill="#ddd"/><path d="M992 112 l7-7 2 2 -7 7z" fill="#f0c070"/>
<g fill="#f0f0f0"><path d="M955 105 h6 l-3 3z"/><path d="M1086 108 h6 l-3 3z"/></g>
<!-- PROPERTIES -->
<rect x="1116" y="52" width="20" height="27" fill="#d8d8d8"/><rect x="1118" y="55" width="14" height="10" fill="#5ab4f0"/><path d="M1118 70 h12 M1118 75 h8 M1122 68 v4 M1125 72 v5" stroke="#777" stroke-width="1"/><path d="M1130 76 l8 -8 6 6 -8 8 z" fill="#f0c070"/><path d="M1138 68 l4 -4 6 6 -4 4z" fill="#eee"/><circle cx="1170.5" cy="60" r="8" fill="#e05050"/><path d="M1170.5 60 l-8-1 a8 8 0 0 1 5-7z" fill="#50b050"/><path d="M1170.5 60 l0-8 a8 8 0 0 1 7 4z" fill="#e0c080"/><path d="M1170.5 60 l-8 1 a8 8 0 0 0 4 6z" fill="#5080c0"/><path d="M1170.5 60 l-4 7 a8 8 0 0 0 6 1z" fill="#3030e0"/>
<g fill="#ddd"><rect x="1163" y="76" width="16" height="2"/><rect x="1163" y="81" width="16" height="2.5"/><rect x="1163" y="86" width="16" height="3"/></g>
<g stroke="#ddd"><path d="M1163 101 h16" stroke-dasharray="1.5 1"/><path d="M1163 106 h16" stroke-dasharray="4 1"/><path d="M1163 111 h16" stroke-dasharray="4 1 1.5 1"/></g>
<g fill="#f0f0f0"><path d="M1349 60 h7 l-3.5 3.5z"/><path d="M1349 83 h7 l-3.5 3.5z"/><path d="M1349 107 h7 l-3.5 3.5z"/></g>
<!-- GROUPS -->
<path d="M1373 56 h-3 v28 h3 M1386 65 h3 v19 h-3" fill="none" stroke="#ddd" stroke-width="1.5"/>
<rect x="1375" y="61" width="9" height="8" fill="#5ab4f0"/><circle cx="1379.5" cy="75" r="4" fill="#aaa"/>
<circle cx="1392" cy="61" r="6" fill="#f0c070"/>
<g fill="none" stroke="#ccc"><rect x="1412" y="55" width="6" height="5"/><circle cx="1415" cy="64" r="2.5"/><rect x="1412" y="78" width="6" height="5"/><circle cx="1415" cy="87" r="2.5"/></g>
<path d="M1421 58 l5 5 M1426 58 l-5 5" stroke="#e03030" stroke-width="1.5"/><path d="M1418 92 l6-6 2 2 -6 6z" fill="#f0c070"/>
<path d="M1412 103 v14 M1420 103 v14" stroke="#ddd"/><path d="M1418 105 l0 12 3-3 3 5 2-1 -3-5 4 0z" fill="#fff"/><rect x="1412" y="104" width="5" height="4" fill="none" stroke="#50c050"/>
<!-- UTILITIES -->
<path d="M1455.5 60 v-10 M1483 60 v-10 M1456 55 h27" stroke="#ddd" stroke-width="1.2"/><path d="M1456 55 l4 -2 v4z M1483 55 l-4 -2 v4z" fill="#ddd"/>
<rect x="1455" y="66" width="28" height="5" fill="#f0c070"/><path d="M1458 66 v2 M1461 66 v2 M1464 66 v2 M1467 66 v2 M1470 66 v2 M1473 66 v2 M1476 66 v2 M1479 66 v2" stroke="#8a6a30" stroke-width="0.8"/>
<path d="M1507 57 v12 l3-3 2 4 2-1 -2-4 4 0z" fill="#fff"/><rect x="1514.5" y="60.5" width="8" height="8" fill="#ddd"/><path d="M1516 62.5 h5 M1516 64.5 h5 M1516 66.5 h5" stroke="#5ab4f0" stroke-width="0.8"/><path d="M1513 53 l2 3 -2 1 3 2" stroke="#f0c070" stroke-width="1.6" fill="none"/>
<rect x="1507.5" y="77.5" width="14" height="13" fill="none" stroke="#50c050" stroke-dasharray="2 1"/><rect x="1510" y="80" width="7" height="8" fill="none" stroke="#50c050"/><path d="M1516 84 v10 l2-2 2 3 1-1 -2-3 3 0z" fill="#fff"/>
<rect x="1509" y="101" width="12" height="16" fill="#ccc"/><rect x="1511" y="103" width="8" height="3" fill="#555"/>
<g fill="#555"><rect x="1511" y="108" width="2" height="2"/><rect x="1514" y="108" width="2" height="2"/><rect x="1517" y="108" width="2" height="2"/><rect x="1511" y="112" width="2" height="2"/><rect x="1514" y="112" width="2" height="2"/><rect x="1517" y="112" width="2" height="2"/></g>
<g fill="#f0f0f0"><path d="M1465 105 h6 l-3 3z"/></g>
<!-- CLIPBOARD -->
<rect x="1544" y="55" width="22" height="27" fill="#e0b070"/><rect x="1550" y="52" width="10" height="4" fill="#eee"/><path d="M1552 62 h11 l5 5 v17 h-16z" fill="#d8d8d8"/><path d="M1563 62 v5 h5" fill="#bbb"/>
<rect x="1587" y="53" width="12" height="12" fill="#ccc"/><path d="M1589 56 h7 M1589 59 h7 M1589 62 h5" stroke="#888" stroke-width="0.8"/><path d="M1597 58 l5 7 M1603 58 l-5 7" stroke="#eee" stroke-width="1"/><circle cx="1597" cy="66" r="2" fill="none" stroke="#eee"/><circle cx="1602" cy="66" r="2" fill="none" stroke="#eee"/>
<path d="M1588 77 h8 v12 h-8z" fill="#bbb"/><path d="M1591 80 h6 l4 4 v9 h-10z" fill="#d8d8d8"/>
<g fill="#f0f0f0"><path d="M1554 105 h6 l-3 3z"/></g>
<!-- VIEW -->
<path d="M1625 56 h14 v12 h18 v12 h-32z" fill="#d8d8d8"/>
<g fill="#f0f0f0"><path d="M1637 105 h6 l-3 3z"/></g>
</svg>

<!-- FILE TABS -->
<svg class="a" style="left:0;top:143px" width="1919" height="30" viewBox="0 143 1919 30">
<defs><linearGradient id="tg" x1="0" y1="0" x2="0" y2="1"><stop offset="0" stop-color="#626262"/><stop offset="1" stop-color="#555555"/></linearGradient>
<linearGradient id="tga" x1="0" y1="0" x2="0" y2="1"><stop offset="0" stop-color="#7c7c7c"/><stop offset="1" stop-color="#5e5e5e"/></linearGradient></defs>
<rect x="0" y="143" width="1919" height="30" fill="#3c3c3c"/>
<rect x="0" y="143" width="1919" height="1" fill="#5e5e5e"/>
<rect x="0" y="168" width="1919" height="5" fill="#575757"/>
<rect x="0" y="144" width="20" height="24" fill="#343434"/>
<path d="M18 169 C24 169 23 148 31 147 L136 147 C142 147 145 150 145 156 L146 169 Z" fill="url(#tg)" stroke="#474747" stroke-width="0.6"/>
<path d="M144 169 C150 169 149 148 157 147 L259 147 C265 147 268 150 268 156 L269 169 Z" fill="url(#tg)" stroke="#474747" stroke-width="0.6"/>
<path d="M249.5 154.5 l7 7 M256.5 154.5 l-7 7" stroke="#2c2c2c" stroke-width="1.4"/>
<path d="M267 169 C273 169 272 148 280 147 L382 147 C388 147 391 150 391 156 L392 169 Z" fill="url(#tg)" stroke="#474747" stroke-width="0.6"/>
<path d="M372.5 154.5 l7 7 M379.5 154.5 l-7 7" stroke="#2c2c2c" stroke-width="1.4"/>
<path d="M390 169 C396 169 395 148 403 147 L505 147 C511 147 514 150 514 156 L515 169 Z" fill="url(#tg)" stroke="#474747" stroke-width="0.6"/>
<path d="M495.5 154.5 l7 7 M502.5 154.5 l-7 7" stroke="#2c2c2c" stroke-width="1.4"/>
<path d="M513 169 C519 169 518 148 526 147 L628 147 C634 147 637 150 637 156 L638 169 Z" fill="url(#tg)" stroke="#474747" stroke-width="0.6"/>
<path d="M618.5 154.5 l7 7 M625.5 154.5 l-7 7" stroke="#2c2c2c" stroke-width="1.4"/>
<path d="M636 169 C642 169 641 148 649 147 L751 147 C757 147 760 150 760 156 L761 169 Z" fill="url(#tg)" stroke="#474747" stroke-width="0.6"/>
<path d="M741.5 154.5 l7 7 M748.5 154.5 l-7 7" stroke="#2c2c2c" stroke-width="1.4"/>
<path d="M759 169 C765 169 764 148 772 147 L886 147 C892 147 895 150 895 156 L896 169 Z" fill="url(#tg)" stroke="#474747" stroke-width="0.6"/>
<path d="M876.5 154.5 l7 7 M883.5 154.5 l-7 7" stroke="#2c2c2c" stroke-width="1.4"/>
<path d="M894 169 C900 169 899 148 907 147 L1009 147 C1015 147 1018 150 1018 156 L1019 169 Z" fill="url(#tg)" stroke="#474747" stroke-width="0.6"/>
<path d="M999.5 154.5 l7 7 M1006.5 154.5 l-7 7" stroke="#2c2c2c" stroke-width="1.4"/>
<path d="M1017 169 C1023 169 1022 148 1030 147 L1132 147 C1138 147 1141 150 1141 156 L1142 169 Z" fill="url(#tg)" stroke="#474747" stroke-width="0.6"/>
<path d="M1122.5 154.5 l7 7 M1129.5 154.5 l-7 7" stroke="#2c2c2c" stroke-width="1.4"/>
<path d="M1140 169 C1146 169 1145 148 1153 147 L1267 147 C1273 147 1276 150 1276 156 L1277 169 Z" fill="url(#tg)" stroke="#474747" stroke-width="0.6"/>
<path d="M1257.5 154.5 l7 7 M1264.5 154.5 l-7 7" stroke="#2c2c2c" stroke-width="1.4"/>
<path d="M1275 169 C1281 169 1280 148 1288 147 L1390 147 C1396 147 1399 150 1399 156 L1400 169 Z" fill="url(#tg)" stroke="#474747" stroke-width="0.6"/>
<path d="M1380.5 154.5 l7 7 M1387.5 154.5 l-7 7" stroke="#2c2c2c" stroke-width="1.4"/>
<path d="M1398 169 C1404 169 1403 148 1411 147 L1513 147 C1519 147 1522 150 1522 156 L1523 169 Z" fill="url(#tg)" stroke="#474747" stroke-width="0.6"/>
<path d="M1503.5 154.5 l7 7 M1510.5 154.5 l-7 7" stroke="#2c2c2c" stroke-width="1.4"/>
<path d="M1521 169 C1527 169 1526 148 1534 147 L1648 147 C1654 147 1657 150 1657 156 L1658 169 Z" fill="url(#tg)" stroke="#474747" stroke-width="0.6"/>
<path d="M1638.5 154.5 l7 7 M1645.5 154.5 l-7 7" stroke="#2c2c2c" stroke-width="1.4"/>
<path d="M1656 169 C1662 169 1661 148 1669 147 L1771 147 C1777 147 1780 150 1780 156 L1781 169 Z" fill="url(#tg)" stroke="#474747" stroke-width="0.6"/>
<path d="M1761.5 154.5 l7 7 M1768.5 154.5 l-7 7" stroke="#2c2c2c" stroke-width="1.4"/>
<path d="M1779 169 C1785 169 1784 148 1792 147 L1894 147 C1900 147 1903 150 1903 156 L1904 169 Z" fill="url(#tga)" stroke="#474747" stroke-width="0.6"/>
<path d="M1884.5 154.5 l7 7 M1891.5 154.5 l-7 7" stroke="#2c2c2c" stroke-width="1.4"/>
<path d="M1903 169 C1909 169 1908 148 1916 147 L1981 147 C1987 147 1990 150 1990 156 L1991 169 Z" fill="url(#tg)" stroke="#474747" stroke-width="0.6"/>
</svg>
<svg class="a" style="left:0;top:0" width="1919" height="173" viewBox="0 0 1919 173" font-family="Liberation Sans"><text x="685.5" y="16" font-size="12" fill="#141414" textLength="241.0" lengthAdjust="spacingAndGlyphs"  xml:space="preserve">Autodesk AutoCAD 2019   KSR-SJP-D111.dwg</text>
<text x="1327.0" y="16" font-size="11" fill="#d4d4d4" textLength="121.8" lengthAdjust="spacingAndGlyphs" font-style="italic" xml:space="preserve">Type a keyword or phrase</text>
<text x="1552.5" y="16.5" font-size="12.5" fill="#f6f6f6" textLength="36.3" lengthAdjust="spacingAndGlyphs"  xml:space="preserve">Sign In</text>
<text x="54.5" y="39" font-size="12" fill="#f2f2f2" textLength="34.0" lengthAdjust="spacingAndGlyphs"  xml:space="preserve">Home</text>
<text x="107.5" y="39" font-size="12" fill="#e6e6e6" textLength="30.0" lengthAdjust="spacingAndGlyphs"  xml:space="preserve">Insert</text>
<text x="156.5" y="39" font-size="12" fill="#e6e6e6" textLength="50.0" lengthAdjust="spacingAndGlyphs"  xml:space="preserve">Annotate</text>
<text x="225.5" y="39" font-size="12" fill="#e6e6e6" textLength="58.0" lengthAdjust="spacingAndGlyphs"  xml:space="preserve">Parametric</text>
<text x="302.5" y="39" font-size="12" fill="#e6e6e6" textLength="26.0" lengthAdjust="spacingAndGlyphs"  xml:space="preserve">View</text>
<text x="346.5" y="39" font-size="12" fill="#e6e6e6" textLength="45.0" lengthAdjust="spacingAndGlyphs"  xml:space="preserve">Manage</text>
<text x="410.5" y="39" font-size="12" fill="#e6e6e6" textLength="39.0" lengthAdjust="spacingAndGlyphs"  xml:space="preserve">Output</text>
<text x="468.7" y="39" font-size="12" fill="#e6e6e6" textLength="42.7" lengthAdjust="spacingAndGlyphs"  xml:space="preserve">Add-ins</text>
<text x="531.1" y="39" font-size="12" fill="#e6e6e6" textLength="61.7" lengthAdjust="spacingAndGlyphs"  xml:space="preserve">Collaborate</text>
<text x="612.0" y="39" font-size="12" fill="#e6e6e6" textLength="69.4" lengthAdjust="spacingAndGlyphs"  xml:space="preserve">Express Tools</text>
<text x="700.8" y="39" font-size="12" fill="#e6e6e6" textLength="76.9" lengthAdjust="spacingAndGlyphs"  xml:space="preserve">Featured Apps</text>
<text x="796.7" y="39" font-size="12" fill="#f2f2f2" textLength="37.0" lengthAdjust="spacingAndGlyphs"  xml:space="preserve">Layout</text>
<text x="11.7" y="99" font-size="12" fill="#f0f0f0" textLength="23.0" lengthAdjust="spacingAndGlyphs"  xml:space="preserve">Line</text>
<text x="45.1" y="99" font-size="12" fill="#f0f0f0" textLength="42.7" lengthAdjust="spacingAndGlyphs"  xml:space="preserve">Polyline</text>
<text x="101.0" y="99" font-size="12" fill="#f0f0f0" textLength="30.5" lengthAdjust="spacingAndGlyphs"  xml:space="preserve">Circle</text>
<text x="152.5" y="99" font-size="12" fill="#f0f0f0" textLength="19.0" lengthAdjust="spacingAndGlyphs"  xml:space="preserve">Arc</text>
<text x="92.9" y="137" font-size="12" fill="#f0f0f0" textLength="27.6" lengthAdjust="spacingAndGlyphs"  xml:space="preserve">Draw</text>
<text x="253.6" y="65" font-size="12" fill="#f0f0f0" textLength="31.0" lengthAdjust="spacingAndGlyphs"  xml:space="preserve">Move</text>
<text x="325.9" y="65" font-size="12" fill="#f0f0f0" textLength="34.8" lengthAdjust="spacingAndGlyphs"  xml:space="preserve">Rotate</text>
<text x="395.0" y="65" font-size="12" fill="#f0f0f0" textLength="23.3" lengthAdjust="spacingAndGlyphs"  xml:space="preserve">Trim</text>
<text x="253.6" y="89" font-size="12" fill="#f0f0f0" textLength="28.6" lengthAdjust="spacingAndGlyphs"  xml:space="preserve">Copy</text>
<text x="325.9" y="89" font-size="12" fill="#f0f0f0" textLength="33.5" lengthAdjust="spacingAndGlyphs"  xml:space="preserve">Mirror</text>
<text x="395.0" y="89" font-size="12" fill="#f0f0f0" textLength="25.4" lengthAdjust="spacingAndGlyphs"  xml:space="preserve">Fillet</text>
<text x="253.6" y="113" font-size="12" fill="#f0f0f0" textLength="37.6" lengthAdjust="spacingAndGlyphs"  xml:space="preserve">Stretch</text>
<text x="325.9" y="113" font-size="12" fill="#f0f0f0" textLength="28.1" lengthAdjust="spacingAndGlyphs"  xml:space="preserve">Scale</text>
<text x="395.0" y="113" font-size="12" fill="#f0f0f0" textLength="28.3" lengthAdjust="spacingAndGlyphs"  xml:space="preserve">Array</text>
<text x="325.2" y="137" font-size="12" fill="#f0f0f0" textLength="38.3" lengthAdjust="spacingAndGlyphs"  xml:space="preserve">Modify</text>
<text x="489.5" y="99" font-size="12" fill="#f0f0f0" textLength="21.0" lengthAdjust="spacingAndGlyphs"  xml:space="preserve">Text</text>
<text x="523.7" y="99" font-size="12" fill="#f0f0f0" textLength="57.6" lengthAdjust="spacingAndGlyphs"  xml:space="preserve">Dimension</text>
<text x="609.7" y="65" font-size="12" fill="#f0f0f0" textLength="32.9" lengthAdjust="spacingAndGlyphs"  xml:space="preserve">Linear</text>
<text x="609.7" y="89" font-size="12" fill="#f0f0f0" textLength="35.9" lengthAdjust="spacingAndGlyphs"  xml:space="preserve">Leader</text>
<text x="609.7" y="113" font-size="12" fill="#f0f0f0" textLength="28.1" lengthAdjust="spacingAndGlyphs"  xml:space="preserve">Table</text>
<text x="532.9" y="137" font-size="12" fill="#f0f0f0" textLength="60.2" lengthAdjust="spacingAndGlyphs"  xml:space="preserve">Annotation</text>
<text x="682.9" y="99" font-size="12" fill="#f0f0f0" textLength="28.8" lengthAdjust="spacingAndGlyphs"  xml:space="preserve">Layer</text>
<text x="669.8" y="114" font-size="12" fill="#f0f0f0" textLength="53.4" lengthAdjust="spacingAndGlyphs"  xml:space="preserve">Properties</text>
<text x="827.2" y="65" font-size="12" fill="#f0f0f0" textLength="7.8" lengthAdjust="spacingAndGlyphs"  xml:space="preserve">0</text>
<text x="848.0" y="89" font-size="12" fill="#f0f0f0" textLength="72.4" lengthAdjust="spacingAndGlyphs"  xml:space="preserve">Make Current</text>
<text x="848.0" y="113" font-size="12" fill="#f0f0f0" textLength="65.6" lengthAdjust="spacingAndGlyphs"  xml:space="preserve">Match Layer</text>
<text x="777.8" y="137" font-size="12" fill="#f0f0f0" textLength="33.7" lengthAdjust="spacingAndGlyphs"  xml:space="preserve">Layers</text>
<text x="944.4" y="99" font-size="12" fill="#f0f0f0" textLength="30.1" lengthAdjust="spacingAndGlyphs"  xml:space="preserve">Insert</text>
<text x="1004.1" y="65" font-size="12" fill="#f0f0f0" textLength="34.6" lengthAdjust="spacingAndGlyphs"  xml:space="preserve">Create</text>
<text x="1004.1" y="89" font-size="12" fill="#f0f0f0" textLength="20.3" lengthAdjust="spacingAndGlyphs"  xml:space="preserve">Edit</text>
<text x="1004.1" y="113" font-size="12" fill="#f0f0f0" textLength="75.5" lengthAdjust="spacingAndGlyphs"  xml:space="preserve">Edit Attributes</text>
<text x="997.3" y="137" font-size="12" fill="#f0f0f0" textLength="29.0" lengthAdjust="spacingAndGlyphs"  xml:space="preserve">Block</text>
<text x="1113.8" y="99" font-size="12" fill="#f0f0f0" textLength="34.2" lengthAdjust="spacingAndGlyphs"  xml:space="preserve">Match</text>
<text x="1103.6" y="114" font-size="12" fill="#f0f0f0" textLength="53.9" lengthAdjust="spacingAndGlyphs"  xml:space="preserve">Properties</text>
<text x="1220.0" y="65" font-size="12" fill="#f0f0f0" textLength="41.1" lengthAdjust="spacingAndGlyphs"  xml:space="preserve">ByLayer</text>
<text x="1250.9" y="89" font-size="12" fill="#f0f0f0" textLength="41.4" lengthAdjust="spacingAndGlyphs"  xml:space="preserve">ByLayer</text>
<text x="1250.9" y="113" font-size="12" fill="#f0f0f0" textLength="47.5" lengthAdjust="spacingAndGlyphs"  xml:space="preserve">BYLAYER</text>
<text x="1191.5" y="137" font-size="12" fill="#f0f0f0" textLength="54.0" lengthAdjust="spacingAndGlyphs"  xml:space="preserve">Properties</text>
<text x="1369.0" y="99" font-size="12" fill="#f0f0f0" textLength="33.1" lengthAdjust="spacingAndGlyphs"  xml:space="preserve">Group</text>
<text x="1371.9" y="137" font-size="12" fill="#f0f0f0" textLength="38.3" lengthAdjust="spacingAndGlyphs"  xml:space="preserve">Groups</text>
<text x="1446.0" y="99" font-size="12" fill="#f0f0f0" textLength="45.7" lengthAdjust="spacingAndGlyphs"  xml:space="preserve">Measure</text>
<text x="1453.7" y="137" font-size="12" fill="#f0f0f0" textLength="39.6" lengthAdjust="spacingAndGlyphs"  xml:space="preserve">Utilities</text>
<text x="1543.2" y="99" font-size="12" fill="#f0f0f0" textLength="28.5" lengthAdjust="spacingAndGlyphs"  xml:space="preserve">Paste</text>
<text x="1543.8" y="137" font-size="12" fill="#f0f0f0" textLength="52.5" lengthAdjust="spacingAndGlyphs"  xml:space="preserve">Clipboard</text>
<text x="1628.8" y="99" font-size="12" fill="#f0f0f0" textLength="24.7" lengthAdjust="spacingAndGlyphs"  xml:space="preserve">Base</text>
<text x="1614.3" y="137" font-size="12" fill="#f0f0f0" textLength="26.5" lengthAdjust="spacingAndGlyphs"  xml:space="preserve">View</text>
<text x="31.5" y="163" font-size="11.5" fill="#c4c4d0" textLength="25.0" lengthAdjust="spacingAndGlyphs"  xml:space="preserve">Start</text>
<text x="154.2" y="163" font-size="11.5" fill="#c4c4d0" textLength="86.1" lengthAdjust="spacingAndGlyphs"  xml:space="preserve">KSR-SJP-CP084*</text>
<text x="279.5" y="163" font-size="11.5" fill="#c4c4d0" textLength="78.5" lengthAdjust="spacingAndGlyphs"  xml:space="preserve">KSR-SJP-D070*</text>
<text x="402.5" y="163" font-size="11.5" fill="#c4c4d0" textLength="78.5" lengthAdjust="spacingAndGlyphs"  xml:space="preserve">KSR-SJP-D072*</text>
<text x="525.7" y="163" font-size="11.5" fill="#c4c4d0" textLength="78.5" lengthAdjust="spacingAndGlyphs"  xml:space="preserve">KSR-SJP-D080*</text>
<text x="648.7" y="163" font-size="11.5" fill="#c4c4d0" textLength="78.5" lengthAdjust="spacingAndGlyphs"  xml:space="preserve">KSR-SJP-D081*</text>
<text x="771.5" y="163" font-size="11.5" fill="#c4c4d0" textLength="95.7" lengthAdjust="spacingAndGlyphs"  xml:space="preserve">KSR-SJP-D084 D3*</text>
<text x="906.5" y="163" font-size="11.5" fill="#c4c4d0" textLength="78.5" lengthAdjust="spacingAndGlyphs"  xml:space="preserve">KSR-SJP-D090*</text>
<text x="1029.5" y="163" font-size="11.5" fill="#c4c4d0" textLength="79.0" lengthAdjust="spacingAndGlyphs"  xml:space="preserve">KSR-SJP-D091*</text>
<text x="1152.5" y="163" font-size="11.5" fill="#c4c4d0" textLength="95.5" lengthAdjust="spacingAndGlyphs"  xml:space="preserve">KSR-SJP-D094 D3*</text>
<text x="1287.5" y="163" font-size="11.5" fill="#c4c4d0" textLength="78.5" lengthAdjust="spacingAndGlyphs"  xml:space="preserve">KSR-SJP-D100*</text>
<text x="1410.3" y="163" font-size="11.5" fill="#c4c4d0" textLength="79.5" lengthAdjust="spacingAndGlyphs"  xml:space="preserve">KSR-SJP-D101*</text>
<text x="1533.4" y="163" font-size="11.5" fill="#c4c4d0" textLength="96.5" lengthAdjust="spacingAndGlyphs"  xml:space="preserve">KSR-SJP-D104 D2*</text>
<text x="1668.6" y="163" font-size="11.5" fill="#c4c4d0" textLength="78.9" lengthAdjust="spacingAndGlyphs"  xml:space="preserve">KSR-SJP-D110*</text>
<text x="1791.7" y="163" font-size="11.5" fill="#f4f4f4" textLength="73.2" lengthAdjust="spacingAndGlyphs"  xml:space="preserve">KSR-SJP-D111</text></svg>
</body></html>
